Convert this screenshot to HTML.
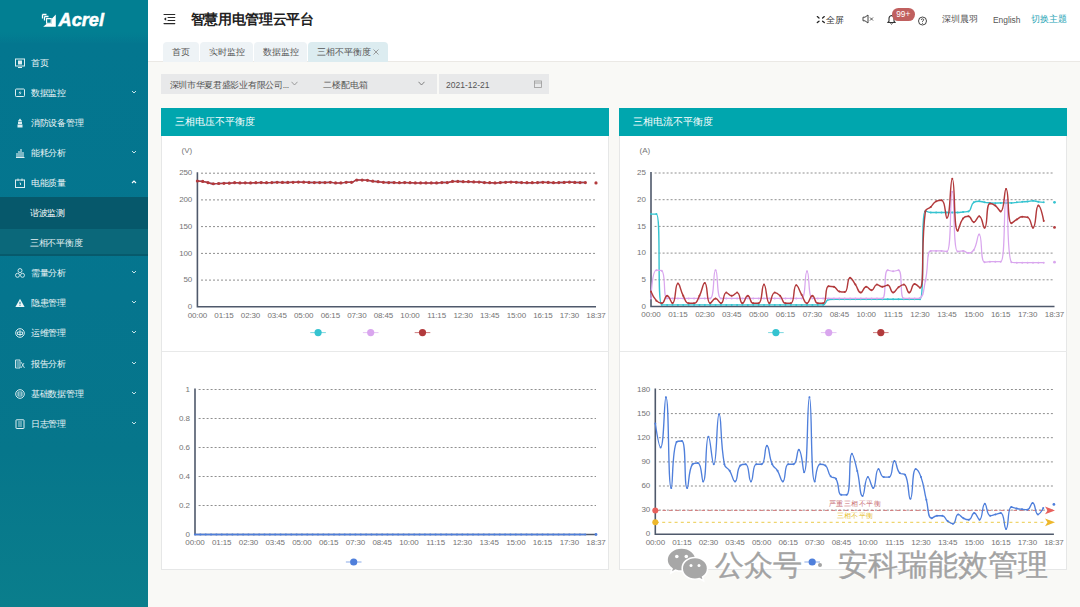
<!DOCTYPE html>
<html><head><meta charset="utf-8">
<style>
*{box-sizing:border-box;margin:0;padding:0}
html,body{width:1080px;height:607px;overflow:hidden;background:#f9f9f6;font-family:"Liberation Sans",sans-serif;position:relative}
.abs{position:absolute}
#side{left:0;top:0;width:148.3px;height:607px;background:linear-gradient(180deg,#027f92 0px,#03768f 44px,#05758e 300px,#06768b 450px,#0a7e8c 607px)}
#logo{left:0;top:0;width:148px;height:44px;background:linear-gradient(180deg,#027f92 0px,#027f92 32px,rgba(3,117,143,0) 44px)}
.mi{position:absolute;left:0;width:148px;height:30px;color:#eef6f8;font-size:8.6px;line-height:30px;letter-spacing:-0.3px}
.mi .t{position:absolute;left:31px;top:0.7px}
.mi .ic{position:absolute;left:15px;top:11px;width:10px;height:10px}
.mi .ch{position:absolute;left:131px;top:12px;width:6px;height:6px}
#hdr{left:148px;top:0;width:932px;height:38px;background:#fff}
#tabsrow{left:148px;top:38px;width:932px;height:24px;background:#fff;border-bottom:1px solid #ebe9e5}
.tab{position:absolute;top:42px;height:19.5px;background:#eef3f6;border-radius:4px 4px 0 0;font-size:8.5px;color:#555;line-height:20px;text-align:center}
.tab.on{background:#dcecf0}
.sel{position:absolute;top:74px;height:20px;background:#e8e9ea;font-size:8.5px;color:#555;line-height:22px}
.panel{position:absolute;background:#fff;border:1px solid #e6e7e7}
.ph{position:absolute;background:#00a6ae;color:#fff;font-size:10px;line-height:27px}
.tk{font-family:"Liberation Sans",sans-serif;font-size:8px;letter-spacing:-0.15px;fill:#747474}
#wm{left:0;top:0}
</style></head><body>
<div id="side" class="abs"></div>
<div id="logo" class="abs">
  <svg class="abs" style="left:41px;top:12.5px" width="16" height="16" viewBox="0 0 16 16">
    <path d="M1.5 1.5 H5.5 M1.5 1.5 V5.5" stroke="#fff" stroke-width="1.3" fill="none"/>
    <path d="M3.5 3.5 H7.5 M3.5 3.5 V7.5" stroke="#fff" stroke-width="1.3" fill="none"/>
    <path d="M14.8 1.5 V13.8 H2.2 L6 10.5 H11 V5.5Z" fill="#fff"/>
    <path d="M5.6 5.6 H10.2 V10.2 H5.6Z" fill="#027f92" stroke="#fff" stroke-width="1.1"/>
  </svg>
  <div class="abs" style="left:58.5px;top:10px;font-size:18.2px;font-weight:bold;font-style:italic;color:#fff;-webkit-text-stroke:0.5px #fff">Acrel</div>
</div>
<!-- menu -->
<div class="mi" style="top:47px"><svg class="ic" viewBox="0 0 10 10"><rect x="0.5" y="1" width="9" height="7" fill="none" stroke="#dfeff2" stroke-width="1"/><rect x="3" y="2.5" width="4" height="4" fill="#dfeff2"/><path d="M3 9.5h4" stroke="#dfeff2"/></svg><span class="t">首页</span></div>
<div class="mi" style="top:77px"><svg class="ic" viewBox="0 0 10 10"><rect x="0.5" y="1" width="9" height="7.5" rx="0.8" fill="none" stroke="#dfeff2" stroke-width="1"/><path d="M5.5 2.5 L3.5 5.2 H5 L4.5 7.2 L6.5 4.5 H5Z" fill="#dfeff2"/></svg><span class="t">数据监控</span><svg class="ch" viewBox="0 0 6 6"><path d="M1 2 L3 4 L5 2" fill="none" stroke="#dfeff2" stroke-width="0.9"/></svg></div>
<div class="mi" style="top:107px"><svg class="ic" viewBox="0 0 10 10"><path d="M5 0.5 L7 3 H3Z M3 3.5 H7 V6 H3Z M2.5 6.5 H7.5 V9.5 H2.5Z" fill="#dfeff2"/></svg><span class="t">消防设备管理</span></div>
<div class="mi" style="top:137px"><svg class="ic" viewBox="0 0 10 10"><path d="M1 9.5 H9.5 M2 9 V5 M4 9 V3 M6 9 V1 M8 9 V4" stroke="#dfeff2" stroke-width="1.1"/></svg><span class="t">能耗分析</span><svg class="ch" viewBox="0 0 6 6"><path d="M1 2 L3 4 L5 2" fill="none" stroke="#dfeff2" stroke-width="0.9"/></svg></div>
<div class="mi" style="top:167px"><svg class="ic" viewBox="0 0 10 10"><rect x="0.5" y="2" width="9" height="7.5" fill="none" stroke="#dfeff2" stroke-width="1"/><path d="M3 0.5 V3 M7 0.5 V3 M4.5 5 H5.5 V7" stroke="#dfeff2" stroke-width="0.9"/></svg><span class="t">电能质量</span><svg class="ch" viewBox="0 0 6 6"><path d="M1 4 L3 2 L5 4" fill="none" stroke="#fff" stroke-width="1.1"/></svg></div>
<div class="abs" style="left:0;top:197px;width:148px;height:32px;background:#06586b"></div>
<div class="abs" style="left:0;top:229px;width:148px;height:25px;background:#0b687a"></div>
<div class="abs" style="left:0;top:253.5px;width:148px;height:2px;background:#075a6c"></div>
<div class="mi" style="top:197px;color:#fff"><span class="t" style="left:30px">谐波监测</span></div>
<div class="mi" style="top:227px;color:#e6f1f3"><span class="t" style="left:30px">三相不平衡度</span></div>
<div class="mi" style="top:257px"><svg class="ic" viewBox="0 0 10 10"><circle cx="5" cy="2.6" r="2" fill="none" stroke="#dfeff2" stroke-width="0.9"/><circle cx="2.5" cy="7.3" r="2" fill="none" stroke="#dfeff2" stroke-width="0.9"/><circle cx="7.5" cy="7.3" r="2" fill="none" stroke="#dfeff2" stroke-width="0.9"/></svg><span class="t">需量分析</span><svg class="ch" viewBox="0 0 6 6"><path d="M1 2 L3 4 L5 2" fill="none" stroke="#dfeff2" stroke-width="0.9"/></svg></div>
<div class="mi" style="top:287px"><svg class="ic" viewBox="0 0 10 10"><path d="M5 0.8 L9.6 9 H0.4Z" fill="#eef6f8"/><path d="M5 3.8 V6.3 M5 7.2 V8" stroke="#06758d" stroke-width="1"/></svg><span class="t">隐患管理</span><svg class="ch" viewBox="0 0 6 6"><path d="M1 2 L3 4 L5 2" fill="none" stroke="#dfeff2" stroke-width="0.9"/></svg></div>
<div class="mi" style="top:317px"><svg class="ic" viewBox="0 0 10 10"><circle cx="5" cy="5" r="4.3" fill="none" stroke="#dfeff2" stroke-width="1"/><path d="M2.5 4 H7.5 V6.5 H2.5Z M5 2 V8" fill="none" stroke="#dfeff2" stroke-width="0.9"/></svg><span class="t">运维管理</span><svg class="ch" viewBox="0 0 6 6"><path d="M1 2 L3 4 L5 2" fill="none" stroke="#dfeff2" stroke-width="0.9"/></svg></div>
<div class="mi" style="top:348px"><svg class="ic" viewBox="0 0 10 10"><path d="M0.5 1 H5 V9 H0.5Z" fill="none" stroke="#dfeff2" stroke-width="0.9"/><path d="M1.5 3 H4 M1.5 5 H4 M1.5 7 H4 M6 3 L9.5 9 M6 9 L9 4" stroke="#dfeff2" stroke-width="0.8"/></svg><span class="t">报告分析</span><svg class="ch" viewBox="0 0 6 6"><path d="M1 2 L3 4 L5 2" fill="none" stroke="#dfeff2" stroke-width="0.9"/></svg></div>
<div class="mi" style="top:378px"><svg class="ic" viewBox="0 0 10 10"><circle cx="5" cy="5" r="4.3" fill="none" stroke="#dfeff2" stroke-width="1"/><path d="M3 3 H7 V7 H3Z M3 5 H7" fill="none" stroke="#dfeff2" stroke-width="0.8"/></svg><span class="t">基础数据管理</span><svg class="ch" viewBox="0 0 6 6"><path d="M1 2 L3 4 L5 2" fill="none" stroke="#dfeff2" stroke-width="0.9"/></svg></div>
<div class="mi" style="top:408px"><svg class="ic" viewBox="0 0 10 10"><rect x="1" y="0.8" width="8" height="8.7" rx="0.5" fill="none" stroke="#dfeff2" stroke-width="1"/><path d="M3 3 H7 M3 5 H7 M3 7 H7" stroke="#dfeff2" stroke-width="0.8"/></svg><span class="t">日志管理</span><svg class="ch" viewBox="0 0 6 6"><path d="M1 2 L3 4 L5 2" fill="none" stroke="#dfeff2" stroke-width="0.9"/></svg></div>

<!-- header -->
<div id="hdr" class="abs"></div>
<svg class="abs" style="left:163px;top:13px" width="13" height="12" viewBox="0 0 13 12">
  <path d="M1 1.5 H11.8 M5 4.5 H11.8 M5 7.5 H11.8 M1 10.6 H11.8" stroke="#2a2a2a" stroke-width="1.1" stroke-linecap="round"/>
  <path d="M3.2 4.3 L0.9 6 L3.2 7.7Z" fill="#2a2a2a"/>
</svg>
<div class="abs" style="left:190.5px;top:10.5px;font-size:14px;letter-spacing:-0.3px;font-weight:bold;color:#222;white-space:nowrap">智慧用电管理云平台</div>
<svg class="abs" style="left:815px;top:14px" width="11" height="10" viewBox="0 0 11 10">
  <path d="M2.3 2.6 L4 4 M9.3 2.6 L7.6 4 M2.3 8.6 L4 7.2 M9.3 8.6 L7.6 7.2" stroke="#222" stroke-width="1.3" stroke-linecap="round" fill="none"/>
</svg>
<div class="abs" style="left:826px;top:14.8px;font-size:8.5px;color:#333">全屏</div>
<svg class="abs" style="left:862px;top:14px" width="13" height="10" viewBox="0 0 13 10">
  <path d="M1 3.2 H3 L6 1 V9 L3 6.8 H1Z" fill="none" stroke="#444" stroke-width="1"/>
  <path d="M8 3.5 L11 6.5 M11 3.5 L8 6.5" stroke="#444" stroke-width="0.9"/>
</svg>
<svg class="abs" style="left:886px;top:14px" width="11" height="11" viewBox="0 0 11 11">
  <path d="M2 8.5 H9 L8 7.2 V4.5 Q8 2 5.5 1.5 Q3 2 3 4.5 V7.2Z" fill="none" stroke="#333" stroke-width="1.1"/>
  <path d="M4.5 9.5 Q5.5 10.7 6.5 9.5" stroke="#333" stroke-width="1" fill="none"/>
</svg>
<div class="abs" style="left:891.5px;top:8.2px;width:23.5px;height:12.8px;border-radius:6.4px;background:#c0605f;color:#fff;font-size:8.3px;line-height:13.5px;text-align:center">99+</div>
<svg class="abs" style="left:917px;top:16px" width="11" height="11" viewBox="0 0 11 11">
  <circle cx="5.5" cy="5" r="4" fill="none" stroke="#333" stroke-width="0.9"/>
  <path d="M4.3 4 Q4.3 2.8 5.5 2.8 Q6.7 2.8 6.7 3.9 Q6.7 4.6 5.5 5.1 V5.9" fill="none" stroke="#333" stroke-width="0.8"/>
  <circle cx="5.5" cy="7.2" r="0.5" fill="#333"/>
</svg>
<div class="abs" style="left:942px;top:14px;font-size:8.5px;color:#555">深圳晨羽</div>
<div class="abs" style="left:993px;top:14.5px;font-size:8.4px;color:#555">English</div>
<div class="abs" style="left:1031px;top:14px;font-size:8.5px;color:#26a4b5">切换主题</div>

<!-- tabs -->
<div id="tabsrow" class="abs"></div>
<div class="tab" style="left:163px;width:36px">首页</div>
<div class="tab" style="left:200px;width:53px">实时监控</div>
<div class="tab" style="left:254px;width:53px">数据监控</div>
<div class="tab on" style="left:308px;width:80px;text-align:left;padding-left:9px">三相不平衡度<svg style="position:absolute;left:65px;top:7px" width="6" height="6" viewBox="0 0 6 6"><path d="M0.5 0.5 L5.5 5.5 M5.5 0.5 L0.5 5.5" stroke="#888" stroke-width="0.8"/></svg></div>

<!-- filters -->
<div class="sel" style="left:161px;width:144px;padding-left:8.6px;font-size:8.6px;letter-spacing:-0.3px;white-space:nowrap">深圳市华夏君盛影业有限公司...</div>
<svg class="abs" style="left:291px;top:81px" width="7" height="5" viewBox="0 0 7 5"><path d="M0.5 0.8 L3.5 4 L6.5 0.8" fill="none" stroke="#888" stroke-width="0.8"/></svg>
<div class="sel" style="left:305px;width:132px;padding-left:18px">二楼配电箱</div>
<svg class="abs" style="left:418px;top:81px" width="7" height="5" viewBox="0 0 7 5"><path d="M0.5 0.8 L3.5 4 L6.5 0.8" fill="none" stroke="#666" stroke-width="0.8"/></svg>
<div class="sel" style="left:439px;width:110px;padding-left:7px;color:#555">2021-12-21</div>
<svg class="abs" style="left:534px;top:80px" width="8" height="8" viewBox="0 0 8 8"><rect x="0.5" y="1" width="7" height="6.5" fill="none" stroke="#999" stroke-width="0.8"/><path d="M0.5 3 H7.5" stroke="#999" stroke-width="0.8"/></svg>

<!-- panels -->
<div class="panel" style="left:161px;top:108px;width:448px;height:461.5px"></div>
<div class="panel" style="left:619px;top:108px;width:448px;height:461.5px"></div>
<div class="abs" style="left:162px;top:351px;width:447px;height:1px;background:#e8e9e9"></div>
<div class="abs" style="left:620px;top:351px;width:447px;height:1px;background:#e8e9e9"></div>
<div class="ph" style="left:161px;top:108px;width:448px;height:27.5px;padding-left:14px">三相电压不平衡度</div>
<div class="ph" style="left:619px;top:108px;width:448px;height:27.5px;padding-left:14px">三相电流不平衡度</div>
<div class="abs" style="left:181.5px;top:145.5px;font-size:8px;color:#777">(V)</div>
<div class="abs" style="left:639.5px;top:145.5px;font-size:8px;color:#777">(A)</div>

<svg class="abs" style="left:0;top:0" width="1080" height="607" viewBox="0 0 1080 607">
<text x="192.1" y="309.0" text-anchor="end" class="tk">0</text>
<line x1="201.0" y1="280.1" x2="596.0" y2="280.1" stroke="#8f8f8f" stroke-width="1" stroke-dasharray="2 2"/>
<text x="192.1" y="282.3" text-anchor="end" class="tk">50</text>
<line x1="201.0" y1="253.4" x2="596.0" y2="253.4" stroke="#8f8f8f" stroke-width="1" stroke-dasharray="2 2"/>
<text x="192.1" y="255.6" text-anchor="end" class="tk">100</text>
<line x1="201.0" y1="226.6" x2="596.0" y2="226.6" stroke="#8f8f8f" stroke-width="1" stroke-dasharray="2 2"/>
<text x="192.1" y="228.8" text-anchor="end" class="tk">150</text>
<line x1="201.0" y1="199.9" x2="596.0" y2="199.9" stroke="#8f8f8f" stroke-width="1" stroke-dasharray="2 2"/>
<text x="192.1" y="202.1" text-anchor="end" class="tk">200</text>
<line x1="201.0" y1="173.2" x2="596.0" y2="173.2" stroke="#8f8f8f" stroke-width="1" stroke-dasharray="2 2"/>
<text x="192.1" y="175.4" text-anchor="end" class="tk">250</text>
<text x="197.4" y="317.7" text-anchor="middle" class="tk">00:00</text>
<text x="224.0" y="317.7" text-anchor="middle" class="tk">01:15</text>
<text x="250.5" y="317.7" text-anchor="middle" class="tk">02:30</text>
<text x="277.1" y="317.7" text-anchor="middle" class="tk">03:45</text>
<text x="303.7" y="317.7" text-anchor="middle" class="tk">05:00</text>
<text x="330.3" y="317.7" text-anchor="middle" class="tk">06:15</text>
<text x="356.8" y="317.7" text-anchor="middle" class="tk">07:30</text>
<text x="383.4" y="317.7" text-anchor="middle" class="tk">08:45</text>
<text x="410.0" y="317.7" text-anchor="middle" class="tk">10:00</text>
<text x="436.6" y="317.7" text-anchor="middle" class="tk">11:15</text>
<text x="463.1" y="317.7" text-anchor="middle" class="tk">12:30</text>
<text x="489.7" y="317.7" text-anchor="middle" class="tk">13:45</text>
<text x="516.3" y="317.7" text-anchor="middle" class="tk">15:00</text>
<text x="542.9" y="317.7" text-anchor="middle" class="tk">16:15</text>
<text x="569.4" y="317.7" text-anchor="middle" class="tk">17:30</text>
<text x="596.0" y="317.7" text-anchor="middle" class="tk">18:37</text>
<path d="M197.40 181.02 C197.40 181.02 200.09 181.02 202.71 181.41 C205.41 181.81 205.36 182.12 208.03 182.70 C210.67 183.28 210.66 183.74 213.34 183.74 C215.98 183.74 216.00 183.58 218.66 183.48 C221.31 183.38 221.32 183.42 223.97 183.35 C226.63 183.29 226.64 183.35 229.29 183.22 C231.95 183.09 231.94 182.70 234.60 182.70 C237.26 182.70 237.26 182.96 239.92 182.96 C242.57 182.96 242.57 182.83 245.23 182.83 C247.89 182.83 247.89 182.96 250.55 182.96 C253.21 182.96 253.20 182.80 255.86 182.70 C258.52 182.61 258.52 182.57 261.18 182.57 C263.83 182.57 263.83 182.70 266.49 182.70 C269.15 182.70 269.15 182.67 271.81 182.57 C274.46 182.48 274.46 182.32 277.12 182.32 C279.78 182.32 279.78 182.44 282.43 182.44 C285.09 182.44 285.09 182.44 287.75 182.44 C290.41 182.44 290.41 182.41 293.06 182.32 C295.72 182.22 295.72 182.06 298.38 182.06 C301.03 182.06 301.04 182.09 303.69 182.19 C306.35 182.28 306.35 182.35 309.01 182.44 C311.66 182.54 311.66 182.57 314.32 182.57 C316.98 182.57 316.98 182.57 319.64 182.57 C322.29 182.57 322.30 182.57 324.95 182.57 C327.61 182.57 327.62 182.32 330.27 182.32 C332.93 182.32 332.91 182.96 335.58 182.96 C338.23 182.96 338.25 182.96 340.90 182.96 C343.56 182.96 343.54 182.32 346.21 182.32 C348.86 182.32 348.97 182.32 351.53 182.32 C354.29 182.32 354.08 180.11 356.84 180.11 C359.39 180.11 359.50 180.11 362.15 180.11 C364.81 180.11 364.82 180.11 367.47 180.37 C370.14 180.63 370.12 180.82 372.78 181.15 C375.43 181.47 375.44 181.38 378.10 181.67 C380.76 181.96 380.75 182.09 383.41 182.32 C386.06 182.54 386.07 182.57 388.73 182.57 C391.38 182.57 391.39 182.57 394.04 182.57 C396.70 182.57 396.70 182.70 399.36 182.70 C402.01 182.70 402.01 182.57 404.67 182.57 C407.33 182.57 407.33 182.61 409.99 182.70 C412.65 182.80 412.64 182.96 415.30 182.96 C417.96 182.96 417.96 182.96 420.62 182.96 C423.27 182.96 423.27 182.96 425.93 182.96 C428.59 182.96 428.59 182.96 431.25 182.96 C433.90 182.96 433.91 182.96 436.56 182.96 C439.22 182.96 439.21 182.57 441.87 182.57 C444.53 182.57 444.56 182.57 447.19 182.57 C449.88 182.57 449.82 181.41 452.50 181.41 C455.13 181.41 455.16 181.41 457.82 181.41 C460.48 181.41 460.47 181.67 463.13 181.67 C465.79 181.67 465.79 181.67 468.45 181.67 C471.11 181.67 471.10 181.83 473.76 181.93 C476.42 182.02 476.43 181.93 479.08 182.06 C481.74 182.19 481.73 182.44 484.39 182.57 C487.04 182.70 487.05 182.61 489.71 182.70 C492.37 182.80 492.37 182.96 495.02 182.96 C497.68 182.96 497.68 182.74 500.34 182.57 C502.99 182.41 502.99 182.44 505.65 182.32 C508.31 182.19 508.31 182.06 510.97 182.06 C513.62 182.06 513.62 182.19 516.28 182.32 C518.94 182.44 518.94 182.48 521.59 182.57 C524.25 182.67 524.25 182.70 526.91 182.70 C529.57 182.70 529.57 182.70 532.22 182.70 C534.88 182.70 534.88 182.67 537.54 182.57 C540.20 182.48 540.19 182.32 542.85 182.32 C545.51 182.32 545.51 182.35 548.17 182.44 C550.83 182.54 550.82 182.70 553.48 182.70 C556.14 182.70 556.14 182.64 558.80 182.57 C561.45 182.51 561.46 182.54 564.11 182.44 C566.77 182.35 566.77 182.19 569.43 182.19 C572.08 182.19 572.08 182.35 574.74 182.44 C577.40 182.54 577.40 182.57 580.06 182.57 C582.71 182.57 585.37 182.57 585.37 182.57" fill="none" stroke="#35c3d0" stroke-width="1.40" stroke-linejoin="round"/>
<path d="M197.40 181.02 C197.40 181.02 200.09 181.02 202.71 181.41 C205.41 181.81 205.36 182.12 208.03 182.70 C210.67 183.28 210.66 183.74 213.34 183.74 C215.98 183.74 216.00 183.58 218.66 183.48 C221.31 183.38 221.32 183.42 223.97 183.35 C226.63 183.29 226.64 183.35 229.29 183.22 C231.95 183.09 231.94 182.70 234.60 182.70 C237.26 182.70 237.26 182.96 239.92 182.96 C242.57 182.96 242.57 182.83 245.23 182.83 C247.89 182.83 247.89 182.96 250.55 182.96 C253.21 182.96 253.20 182.80 255.86 182.70 C258.52 182.61 258.52 182.57 261.18 182.57 C263.83 182.57 263.83 182.70 266.49 182.70 C269.15 182.70 269.15 182.67 271.81 182.57 C274.46 182.48 274.46 182.32 277.12 182.32 C279.78 182.32 279.78 182.44 282.43 182.44 C285.09 182.44 285.09 182.44 287.75 182.44 C290.41 182.44 290.41 182.41 293.06 182.32 C295.72 182.22 295.72 182.06 298.38 182.06 C301.03 182.06 301.04 182.09 303.69 182.19 C306.35 182.28 306.35 182.35 309.01 182.44 C311.66 182.54 311.66 182.57 314.32 182.57 C316.98 182.57 316.98 182.57 319.64 182.57 C322.29 182.57 322.30 182.57 324.95 182.57 C327.61 182.57 327.62 182.32 330.27 182.32 C332.93 182.32 332.91 182.96 335.58 182.96 C338.23 182.96 338.25 182.96 340.90 182.96 C343.56 182.96 343.54 182.32 346.21 182.32 C348.86 182.32 348.97 182.32 351.53 182.32 C354.29 182.32 354.08 180.11 356.84 180.11 C359.39 180.11 359.50 180.11 362.15 180.11 C364.81 180.11 364.82 180.11 367.47 180.37 C370.14 180.63 370.12 180.82 372.78 181.15 C375.43 181.47 375.44 181.38 378.10 181.67 C380.76 181.96 380.75 182.09 383.41 182.32 C386.06 182.54 386.07 182.57 388.73 182.57 C391.38 182.57 391.39 182.57 394.04 182.57 C396.70 182.57 396.70 182.70 399.36 182.70 C402.01 182.70 402.01 182.57 404.67 182.57 C407.33 182.57 407.33 182.61 409.99 182.70 C412.65 182.80 412.64 182.96 415.30 182.96 C417.96 182.96 417.96 182.96 420.62 182.96 C423.27 182.96 423.27 182.96 425.93 182.96 C428.59 182.96 428.59 182.96 431.25 182.96 C433.90 182.96 433.91 182.96 436.56 182.96 C439.22 182.96 439.21 182.57 441.87 182.57 C444.53 182.57 444.56 182.57 447.19 182.57 C449.88 182.57 449.82 181.41 452.50 181.41 C455.13 181.41 455.16 181.41 457.82 181.41 C460.48 181.41 460.47 181.67 463.13 181.67 C465.79 181.67 465.79 181.67 468.45 181.67 C471.11 181.67 471.10 181.83 473.76 181.93 C476.42 182.02 476.43 181.93 479.08 182.06 C481.74 182.19 481.73 182.44 484.39 182.57 C487.04 182.70 487.05 182.61 489.71 182.70 C492.37 182.80 492.37 182.96 495.02 182.96 C497.68 182.96 497.68 182.74 500.34 182.57 C502.99 182.41 502.99 182.44 505.65 182.32 C508.31 182.19 508.31 182.06 510.97 182.06 C513.62 182.06 513.62 182.19 516.28 182.32 C518.94 182.44 518.94 182.48 521.59 182.57 C524.25 182.67 524.25 182.70 526.91 182.70 C529.57 182.70 529.57 182.70 532.22 182.70 C534.88 182.70 534.88 182.67 537.54 182.57 C540.20 182.48 540.19 182.32 542.85 182.32 C545.51 182.32 545.51 182.35 548.17 182.44 C550.83 182.54 550.82 182.70 553.48 182.70 C556.14 182.70 556.14 182.64 558.80 182.57 C561.45 182.51 561.46 182.54 564.11 182.44 C566.77 182.35 566.77 182.19 569.43 182.19 C572.08 182.19 572.08 182.35 574.74 182.44 C577.40 182.54 577.40 182.57 580.06 182.57 C582.71 182.57 585.37 182.57 585.37 182.57" fill="none" stroke="#d9a6ee" stroke-width="1.40" stroke-linejoin="round"/>
<path d="M197.4 172.2 L197.4 306.8 L596.0 306.8" fill="none" stroke="#4f596b" stroke-width="1.6"/>
<path d="M197.40 181.02 C197.40 181.02 200.09 181.02 202.71 181.41 C205.41 181.81 205.36 182.12 208.03 182.70 C210.67 183.28 210.66 183.74 213.34 183.74 C215.98 183.74 216.00 183.58 218.66 183.48 C221.31 183.38 221.32 183.42 223.97 183.35 C226.63 183.29 226.64 183.35 229.29 183.22 C231.95 183.09 231.94 182.70 234.60 182.70 C237.26 182.70 237.26 182.96 239.92 182.96 C242.57 182.96 242.57 182.83 245.23 182.83 C247.89 182.83 247.89 182.96 250.55 182.96 C253.21 182.96 253.20 182.80 255.86 182.70 C258.52 182.61 258.52 182.57 261.18 182.57 C263.83 182.57 263.83 182.70 266.49 182.70 C269.15 182.70 269.15 182.67 271.81 182.57 C274.46 182.48 274.46 182.32 277.12 182.32 C279.78 182.32 279.78 182.44 282.43 182.44 C285.09 182.44 285.09 182.44 287.75 182.44 C290.41 182.44 290.41 182.41 293.06 182.32 C295.72 182.22 295.72 182.06 298.38 182.06 C301.03 182.06 301.04 182.09 303.69 182.19 C306.35 182.28 306.35 182.35 309.01 182.44 C311.66 182.54 311.66 182.57 314.32 182.57 C316.98 182.57 316.98 182.57 319.64 182.57 C322.29 182.57 322.30 182.57 324.95 182.57 C327.61 182.57 327.62 182.32 330.27 182.32 C332.93 182.32 332.91 182.96 335.58 182.96 C338.23 182.96 338.25 182.96 340.90 182.96 C343.56 182.96 343.54 182.32 346.21 182.32 C348.86 182.32 348.97 182.32 351.53 182.32 C354.29 182.32 354.08 180.11 356.84 180.11 C359.39 180.11 359.50 180.11 362.15 180.11 C364.81 180.11 364.82 180.11 367.47 180.37 C370.14 180.63 370.12 180.82 372.78 181.15 C375.43 181.47 375.44 181.38 378.10 181.67 C380.76 181.96 380.75 182.09 383.41 182.32 C386.06 182.54 386.07 182.57 388.73 182.57 C391.38 182.57 391.39 182.57 394.04 182.57 C396.70 182.57 396.70 182.70 399.36 182.70 C402.01 182.70 402.01 182.57 404.67 182.57 C407.33 182.57 407.33 182.61 409.99 182.70 C412.65 182.80 412.64 182.96 415.30 182.96 C417.96 182.96 417.96 182.96 420.62 182.96 C423.27 182.96 423.27 182.96 425.93 182.96 C428.59 182.96 428.59 182.96 431.25 182.96 C433.90 182.96 433.91 182.96 436.56 182.96 C439.22 182.96 439.21 182.57 441.87 182.57 C444.53 182.57 444.56 182.57 447.19 182.57 C449.88 182.57 449.82 181.41 452.50 181.41 C455.13 181.41 455.16 181.41 457.82 181.41 C460.48 181.41 460.47 181.67 463.13 181.67 C465.79 181.67 465.79 181.67 468.45 181.67 C471.11 181.67 471.10 181.83 473.76 181.93 C476.42 182.02 476.43 181.93 479.08 182.06 C481.74 182.19 481.73 182.44 484.39 182.57 C487.04 182.70 487.05 182.61 489.71 182.70 C492.37 182.80 492.37 182.96 495.02 182.96 C497.68 182.96 497.68 182.74 500.34 182.57 C502.99 182.41 502.99 182.44 505.65 182.32 C508.31 182.19 508.31 182.06 510.97 182.06 C513.62 182.06 513.62 182.19 516.28 182.32 C518.94 182.44 518.94 182.48 521.59 182.57 C524.25 182.67 524.25 182.70 526.91 182.70 C529.57 182.70 529.57 182.70 532.22 182.70 C534.88 182.70 534.88 182.67 537.54 182.57 C540.20 182.48 540.19 182.32 542.85 182.32 C545.51 182.32 545.51 182.35 548.17 182.44 C550.83 182.54 550.82 182.70 553.48 182.70 C556.14 182.70 556.14 182.64 558.80 182.57 C561.45 182.51 561.46 182.54 564.11 182.44 C566.77 182.35 566.77 182.19 569.43 182.19 C572.08 182.19 572.08 182.35 574.74 182.44 C577.40 182.54 577.40 182.57 580.06 182.57 C582.71 182.57 585.37 182.57 585.37 182.57" fill="none" stroke="#b23a3c" stroke-width="1.50" stroke-linejoin="round"/>
<circle cx="197.40" cy="181.02" r="1.60" fill="#b23a3c"/>
<circle cx="202.71" cy="181.41" r="1.60" fill="#b23a3c"/>
<circle cx="208.03" cy="182.70" r="1.60" fill="#b23a3c"/>
<circle cx="213.34" cy="183.74" r="1.60" fill="#b23a3c"/>
<circle cx="218.66" cy="183.48" r="1.60" fill="#b23a3c"/>
<circle cx="223.97" cy="183.35" r="1.60" fill="#b23a3c"/>
<circle cx="229.29" cy="183.22" r="1.60" fill="#b23a3c"/>
<circle cx="234.60" cy="182.70" r="1.60" fill="#b23a3c"/>
<circle cx="239.92" cy="182.96" r="1.60" fill="#b23a3c"/>
<circle cx="245.23" cy="182.83" r="1.60" fill="#b23a3c"/>
<circle cx="250.55" cy="182.96" r="1.60" fill="#b23a3c"/>
<circle cx="255.86" cy="182.70" r="1.60" fill="#b23a3c"/>
<circle cx="261.18" cy="182.57" r="1.60" fill="#b23a3c"/>
<circle cx="266.49" cy="182.70" r="1.60" fill="#b23a3c"/>
<circle cx="271.81" cy="182.57" r="1.60" fill="#b23a3c"/>
<circle cx="277.12" cy="182.32" r="1.60" fill="#b23a3c"/>
<circle cx="282.43" cy="182.44" r="1.60" fill="#b23a3c"/>
<circle cx="287.75" cy="182.44" r="1.60" fill="#b23a3c"/>
<circle cx="293.06" cy="182.32" r="1.60" fill="#b23a3c"/>
<circle cx="298.38" cy="182.06" r="1.60" fill="#b23a3c"/>
<circle cx="303.69" cy="182.19" r="1.60" fill="#b23a3c"/>
<circle cx="309.01" cy="182.44" r="1.60" fill="#b23a3c"/>
<circle cx="314.32" cy="182.57" r="1.60" fill="#b23a3c"/>
<circle cx="319.64" cy="182.57" r="1.60" fill="#b23a3c"/>
<circle cx="324.95" cy="182.57" r="1.60" fill="#b23a3c"/>
<circle cx="330.27" cy="182.32" r="1.60" fill="#b23a3c"/>
<circle cx="335.58" cy="182.96" r="1.60" fill="#b23a3c"/>
<circle cx="340.90" cy="182.96" r="1.60" fill="#b23a3c"/>
<circle cx="346.21" cy="182.32" r="1.60" fill="#b23a3c"/>
<circle cx="351.53" cy="182.32" r="1.60" fill="#b23a3c"/>
<circle cx="356.84" cy="180.11" r="1.60" fill="#b23a3c"/>
<circle cx="362.15" cy="180.11" r="1.60" fill="#b23a3c"/>
<circle cx="367.47" cy="180.37" r="1.60" fill="#b23a3c"/>
<circle cx="372.78" cy="181.15" r="1.60" fill="#b23a3c"/>
<circle cx="378.10" cy="181.67" r="1.60" fill="#b23a3c"/>
<circle cx="383.41" cy="182.32" r="1.60" fill="#b23a3c"/>
<circle cx="388.73" cy="182.57" r="1.60" fill="#b23a3c"/>
<circle cx="394.04" cy="182.57" r="1.60" fill="#b23a3c"/>
<circle cx="399.36" cy="182.70" r="1.60" fill="#b23a3c"/>
<circle cx="404.67" cy="182.57" r="1.60" fill="#b23a3c"/>
<circle cx="409.99" cy="182.70" r="1.60" fill="#b23a3c"/>
<circle cx="415.30" cy="182.96" r="1.60" fill="#b23a3c"/>
<circle cx="420.62" cy="182.96" r="1.60" fill="#b23a3c"/>
<circle cx="425.93" cy="182.96" r="1.60" fill="#b23a3c"/>
<circle cx="431.25" cy="182.96" r="1.60" fill="#b23a3c"/>
<circle cx="436.56" cy="182.96" r="1.60" fill="#b23a3c"/>
<circle cx="441.87" cy="182.57" r="1.60" fill="#b23a3c"/>
<circle cx="447.19" cy="182.57" r="1.60" fill="#b23a3c"/>
<circle cx="452.50" cy="181.41" r="1.60" fill="#b23a3c"/>
<circle cx="457.82" cy="181.41" r="1.60" fill="#b23a3c"/>
<circle cx="463.13" cy="181.67" r="1.60" fill="#b23a3c"/>
<circle cx="468.45" cy="181.67" r="1.60" fill="#b23a3c"/>
<circle cx="473.76" cy="181.93" r="1.60" fill="#b23a3c"/>
<circle cx="479.08" cy="182.06" r="1.60" fill="#b23a3c"/>
<circle cx="484.39" cy="182.57" r="1.60" fill="#b23a3c"/>
<circle cx="489.71" cy="182.70" r="1.60" fill="#b23a3c"/>
<circle cx="495.02" cy="182.96" r="1.60" fill="#b23a3c"/>
<circle cx="500.34" cy="182.57" r="1.60" fill="#b23a3c"/>
<circle cx="505.65" cy="182.32" r="1.60" fill="#b23a3c"/>
<circle cx="510.97" cy="182.06" r="1.60" fill="#b23a3c"/>
<circle cx="516.28" cy="182.32" r="1.60" fill="#b23a3c"/>
<circle cx="521.59" cy="182.57" r="1.60" fill="#b23a3c"/>
<circle cx="526.91" cy="182.70" r="1.60" fill="#b23a3c"/>
<circle cx="532.22" cy="182.70" r="1.60" fill="#b23a3c"/>
<circle cx="537.54" cy="182.57" r="1.60" fill="#b23a3c"/>
<circle cx="542.85" cy="182.32" r="1.60" fill="#b23a3c"/>
<circle cx="548.17" cy="182.44" r="1.60" fill="#b23a3c"/>
<circle cx="553.48" cy="182.70" r="1.60" fill="#b23a3c"/>
<circle cx="558.80" cy="182.57" r="1.60" fill="#b23a3c"/>
<circle cx="564.11" cy="182.44" r="1.60" fill="#b23a3c"/>
<circle cx="569.43" cy="182.19" r="1.60" fill="#b23a3c"/>
<circle cx="574.74" cy="182.44" r="1.60" fill="#b23a3c"/>
<circle cx="580.06" cy="182.57" r="1.60" fill="#b23a3c"/>
<circle cx="585.37" cy="182.57" r="1.60" fill="#b23a3c"/>
<circle cx="596.00" cy="182.96" r="1.60" fill="#b23a3c"/>
<text x="645.7" y="308.7" text-anchor="end" class="tk">0</text>
<line x1="654.6" y1="279.8" x2="1054.5" y2="279.8" stroke="#8f8f8f" stroke-width="1" stroke-dasharray="2 2"/>
<text x="645.7" y="282.0" text-anchor="end" class="tk">5</text>
<line x1="654.6" y1="253.1" x2="1054.5" y2="253.1" stroke="#8f8f8f" stroke-width="1" stroke-dasharray="2 2"/>
<text x="645.7" y="255.3" text-anchor="end" class="tk">10</text>
<line x1="654.6" y1="226.4" x2="1054.5" y2="226.4" stroke="#8f8f8f" stroke-width="1" stroke-dasharray="2 2"/>
<text x="645.7" y="228.6" text-anchor="end" class="tk">15</text>
<line x1="654.6" y1="199.7" x2="1054.5" y2="199.7" stroke="#8f8f8f" stroke-width="1" stroke-dasharray="2 2"/>
<text x="645.7" y="201.9" text-anchor="end" class="tk">20</text>
<line x1="654.6" y1="173.0" x2="1054.5" y2="173.0" stroke="#8f8f8f" stroke-width="1" stroke-dasharray="2 2"/>
<text x="645.7" y="175.2" text-anchor="end" class="tk">25</text>
<text x="651.0" y="317.4" text-anchor="middle" class="tk">00:00</text>
<text x="677.9" y="317.4" text-anchor="middle" class="tk">01:15</text>
<text x="704.8" y="317.4" text-anchor="middle" class="tk">02:30</text>
<text x="731.7" y="317.4" text-anchor="middle" class="tk">03:45</text>
<text x="758.6" y="317.4" text-anchor="middle" class="tk">05:00</text>
<text x="785.5" y="317.4" text-anchor="middle" class="tk">06:15</text>
<text x="812.4" y="317.4" text-anchor="middle" class="tk">07:30</text>
<text x="839.3" y="317.4" text-anchor="middle" class="tk">08:45</text>
<text x="866.2" y="317.4" text-anchor="middle" class="tk">10:00</text>
<text x="893.1" y="317.4" text-anchor="middle" class="tk">11:15</text>
<text x="920.0" y="317.4" text-anchor="middle" class="tk">12:30</text>
<text x="946.9" y="317.4" text-anchor="middle" class="tk">13:45</text>
<text x="973.8" y="317.4" text-anchor="middle" class="tk">15:00</text>
<text x="1000.7" y="317.4" text-anchor="middle" class="tk">16:15</text>
<text x="1027.6" y="317.4" text-anchor="middle" class="tk">17:30</text>
<text x="1054.5" y="317.4" text-anchor="middle" class="tk">18:37</text>
<path d="M651.0 172.0 L651.0 306.5 L1054.5 306.5" fill="none" stroke="#4f596b" stroke-width="1.6"/>
<path d="M651.00 214.12 C651.00 214.12 656.08 214.12 656.38 214.12 C661.46 214.12 656.68 304.90 661.76 304.90 C662.06 304.90 664.45 304.90 667.14 304.90 C669.83 304.90 669.83 304.90 672.52 304.90 C675.21 304.90 675.21 304.90 677.90 304.90 C680.59 304.90 680.59 304.90 683.28 304.90 C685.97 304.90 685.97 304.90 688.66 304.90 C691.35 304.90 691.35 304.90 694.04 304.90 C696.73 304.90 696.73 304.90 699.42 304.90 C702.11 304.90 702.11 304.90 704.80 304.90 C707.49 304.90 707.49 304.90 710.18 304.90 C712.87 304.90 712.87 304.90 715.56 304.90 C718.25 304.90 718.25 304.90 720.94 304.90 C723.63 304.90 723.63 304.90 726.32 304.90 C729.01 304.90 729.01 304.90 731.70 304.90 C734.39 304.90 734.39 304.90 737.08 304.90 C739.77 304.90 739.77 304.90 742.46 304.90 C745.15 304.90 745.15 304.90 747.84 304.90 C750.53 304.90 750.53 304.90 753.22 304.90 C755.91 304.90 755.91 304.90 758.60 304.90 C761.29 304.90 761.29 304.90 763.98 304.90 C766.67 304.90 766.67 304.90 769.36 304.90 C772.05 304.90 772.05 304.90 774.74 304.90 C777.43 304.90 777.43 304.90 780.12 304.90 C782.81 304.90 782.81 304.90 785.50 304.90 C788.19 304.90 788.19 304.90 790.88 304.90 C793.57 304.90 793.57 304.90 796.26 304.90 C798.95 304.90 798.95 304.90 801.64 304.90 C804.33 304.90 804.33 304.90 807.02 304.90 C809.71 304.90 809.71 304.90 812.40 304.90 C815.09 304.90 815.09 304.90 817.78 304.90 C820.47 304.90 820.93 304.90 823.16 304.90 C826.31 304.90 825.39 299.93 828.54 299.56 C830.77 299.29 831.23 299.29 833.92 299.29 C836.61 299.29 836.61 299.29 839.30 299.29 C841.99 299.29 841.99 299.29 844.68 299.29 C847.37 299.29 847.37 299.29 850.06 299.29 C852.75 299.29 852.75 299.29 855.44 299.29 C858.13 299.29 858.13 299.29 860.82 299.29 C863.51 299.29 863.51 299.29 866.20 299.29 C868.89 299.29 868.89 299.29 871.58 299.29 C874.27 299.29 874.27 299.29 876.96 299.29 C879.65 299.29 879.65 299.29 882.34 299.29 C885.03 299.29 885.03 299.29 887.72 299.29 C890.41 299.29 890.41 299.29 893.10 299.29 C895.79 299.29 895.79 299.29 898.48 299.29 C901.17 299.29 901.17 299.29 903.86 299.29 C906.55 299.29 906.55 299.29 909.24 299.29 C911.93 299.29 911.93 299.29 914.62 299.29 C917.31 299.29 919.69 299.29 920.00 299.29 C925.07 299.29 920.32 210.91 925.38 210.91 C925.70 210.91 928.01 212.52 930.76 212.52 C933.39 212.52 933.45 212.52 936.14 212.52 C938.83 212.52 938.83 212.52 941.52 212.52 C944.21 212.52 944.21 212.52 946.90 212.52 C949.59 212.52 949.59 212.52 952.28 212.52 C954.97 212.52 954.98 212.52 957.66 212.52 C960.36 212.52 960.35 212.25 963.04 211.98 C965.73 211.72 966.60 211.98 968.42 211.45 C971.98 210.41 970.26 204.42 973.80 202.37 C975.64 201.30 976.49 201.30 979.18 201.30 C981.87 201.30 981.85 201.97 984.56 202.37 C987.23 202.77 987.25 202.70 989.94 202.90 C992.63 203.10 992.63 203.17 995.32 203.17 C998.01 203.17 998.01 202.90 1000.70 202.90 C1003.39 202.90 1003.39 202.90 1006.08 202.90 C1008.77 202.90 1008.78 202.90 1011.46 202.90 C1014.16 202.90 1014.15 202.64 1016.84 202.37 C1019.53 202.10 1019.53 202.04 1022.22 201.84 C1024.91 201.64 1024.92 201.83 1027.60 201.57 C1030.30 201.30 1030.30 200.77 1032.98 200.77 C1035.68 200.77 1035.65 201.43 1038.36 201.84 C1041.03 202.23 1043.74 202.37 1043.74 202.37" fill="none" stroke="#35c3d0" stroke-width="1.40" stroke-linejoin="round"/>
<circle cx="651.00" cy="214.12" r="1.00" fill="#35c3d0"/>
<circle cx="656.38" cy="214.12" r="1.00" fill="#35c3d0"/>
<circle cx="661.76" cy="304.90" r="1.00" fill="#35c3d0"/>
<circle cx="667.14" cy="304.90" r="1.00" fill="#35c3d0"/>
<circle cx="672.52" cy="304.90" r="1.00" fill="#35c3d0"/>
<circle cx="677.90" cy="304.90" r="1.00" fill="#35c3d0"/>
<circle cx="683.28" cy="304.90" r="1.00" fill="#35c3d0"/>
<circle cx="688.66" cy="304.90" r="1.00" fill="#35c3d0"/>
<circle cx="694.04" cy="304.90" r="1.00" fill="#35c3d0"/>
<circle cx="699.42" cy="304.90" r="1.00" fill="#35c3d0"/>
<circle cx="704.80" cy="304.90" r="1.00" fill="#35c3d0"/>
<circle cx="710.18" cy="304.90" r="1.00" fill="#35c3d0"/>
<circle cx="715.56" cy="304.90" r="1.00" fill="#35c3d0"/>
<circle cx="720.94" cy="304.90" r="1.00" fill="#35c3d0"/>
<circle cx="726.32" cy="304.90" r="1.00" fill="#35c3d0"/>
<circle cx="731.70" cy="304.90" r="1.00" fill="#35c3d0"/>
<circle cx="737.08" cy="304.90" r="1.00" fill="#35c3d0"/>
<circle cx="742.46" cy="304.90" r="1.00" fill="#35c3d0"/>
<circle cx="747.84" cy="304.90" r="1.00" fill="#35c3d0"/>
<circle cx="753.22" cy="304.90" r="1.00" fill="#35c3d0"/>
<circle cx="758.60" cy="304.90" r="1.00" fill="#35c3d0"/>
<circle cx="763.98" cy="304.90" r="1.00" fill="#35c3d0"/>
<circle cx="769.36" cy="304.90" r="1.00" fill="#35c3d0"/>
<circle cx="774.74" cy="304.90" r="1.00" fill="#35c3d0"/>
<circle cx="780.12" cy="304.90" r="1.00" fill="#35c3d0"/>
<circle cx="785.50" cy="304.90" r="1.00" fill="#35c3d0"/>
<circle cx="790.88" cy="304.90" r="1.00" fill="#35c3d0"/>
<circle cx="796.26" cy="304.90" r="1.00" fill="#35c3d0"/>
<circle cx="801.64" cy="304.90" r="1.00" fill="#35c3d0"/>
<circle cx="807.02" cy="304.90" r="1.00" fill="#35c3d0"/>
<circle cx="812.40" cy="304.90" r="1.00" fill="#35c3d0"/>
<circle cx="817.78" cy="304.90" r="1.00" fill="#35c3d0"/>
<circle cx="823.16" cy="304.90" r="1.00" fill="#35c3d0"/>
<circle cx="828.54" cy="299.56" r="1.00" fill="#35c3d0"/>
<circle cx="833.92" cy="299.29" r="1.00" fill="#35c3d0"/>
<circle cx="839.30" cy="299.29" r="1.00" fill="#35c3d0"/>
<circle cx="844.68" cy="299.29" r="1.00" fill="#35c3d0"/>
<circle cx="850.06" cy="299.29" r="1.00" fill="#35c3d0"/>
<circle cx="855.44" cy="299.29" r="1.00" fill="#35c3d0"/>
<circle cx="860.82" cy="299.29" r="1.00" fill="#35c3d0"/>
<circle cx="866.20" cy="299.29" r="1.00" fill="#35c3d0"/>
<circle cx="871.58" cy="299.29" r="1.00" fill="#35c3d0"/>
<circle cx="876.96" cy="299.29" r="1.00" fill="#35c3d0"/>
<circle cx="882.34" cy="299.29" r="1.00" fill="#35c3d0"/>
<circle cx="887.72" cy="299.29" r="1.00" fill="#35c3d0"/>
<circle cx="893.10" cy="299.29" r="1.00" fill="#35c3d0"/>
<circle cx="898.48" cy="299.29" r="1.00" fill="#35c3d0"/>
<circle cx="903.86" cy="299.29" r="1.00" fill="#35c3d0"/>
<circle cx="909.24" cy="299.29" r="1.00" fill="#35c3d0"/>
<circle cx="914.62" cy="299.29" r="1.00" fill="#35c3d0"/>
<circle cx="920.00" cy="299.29" r="1.00" fill="#35c3d0"/>
<circle cx="925.38" cy="210.91" r="1.00" fill="#35c3d0"/>
<circle cx="930.76" cy="212.52" r="1.00" fill="#35c3d0"/>
<circle cx="936.14" cy="212.52" r="1.00" fill="#35c3d0"/>
<circle cx="941.52" cy="212.52" r="1.00" fill="#35c3d0"/>
<circle cx="946.90" cy="212.52" r="1.00" fill="#35c3d0"/>
<circle cx="952.28" cy="212.52" r="1.00" fill="#35c3d0"/>
<circle cx="957.66" cy="212.52" r="1.00" fill="#35c3d0"/>
<circle cx="963.04" cy="211.98" r="1.00" fill="#35c3d0"/>
<circle cx="968.42" cy="211.45" r="1.00" fill="#35c3d0"/>
<circle cx="973.80" cy="202.37" r="1.00" fill="#35c3d0"/>
<circle cx="979.18" cy="201.30" r="1.00" fill="#35c3d0"/>
<circle cx="984.56" cy="202.37" r="1.00" fill="#35c3d0"/>
<circle cx="989.94" cy="202.90" r="1.00" fill="#35c3d0"/>
<circle cx="995.32" cy="203.17" r="1.00" fill="#35c3d0"/>
<circle cx="1000.70" cy="202.90" r="1.00" fill="#35c3d0"/>
<circle cx="1006.08" cy="202.90" r="1.00" fill="#35c3d0"/>
<circle cx="1011.46" cy="202.90" r="1.00" fill="#35c3d0"/>
<circle cx="1016.84" cy="202.37" r="1.00" fill="#35c3d0"/>
<circle cx="1022.22" cy="201.84" r="1.00" fill="#35c3d0"/>
<circle cx="1027.60" cy="201.57" r="1.00" fill="#35c3d0"/>
<circle cx="1032.98" cy="200.77" r="1.00" fill="#35c3d0"/>
<circle cx="1038.36" cy="201.84" r="1.00" fill="#35c3d0"/>
<circle cx="1043.74" cy="202.37" r="1.00" fill="#35c3d0"/>
<circle cx="1054.50" cy="202.37" r="1.40" fill="#35c3d0"/>
<path d="M651.00 298.49 C651.00 298.49 651.85 270.19 656.38 270.19 C657.23 270.19 660.90 270.19 661.76 270.72 C666.28 273.52 662.62 298.49 667.14 298.49 C668.00 298.49 669.83 298.49 672.52 298.49 C675.21 298.49 675.21 298.49 677.90 298.49 C680.59 298.49 680.59 298.49 683.28 298.49 C685.97 298.49 685.97 298.49 688.66 298.49 C691.35 298.49 691.35 298.49 694.04 298.49 C696.73 298.49 696.73 298.49 699.42 298.49 C702.11 298.49 702.11 298.49 704.80 298.49 C707.49 298.49 709.33 298.49 710.18 298.49 C714.71 298.49 712.87 270.19 715.56 270.19 C718.25 270.19 716.41 298.49 720.94 298.49 C721.79 298.49 723.63 298.49 726.32 298.49 C729.01 298.49 729.01 298.49 731.70 298.49 C734.39 298.49 734.39 298.49 737.08 298.49 C739.77 298.49 739.77 298.49 742.46 298.49 C745.15 298.49 745.15 298.49 747.84 298.49 C750.53 298.49 750.53 298.49 753.22 298.49 C755.91 298.49 755.91 298.49 758.60 298.49 C761.29 298.49 761.29 298.49 763.98 298.49 C766.67 298.49 766.67 298.49 769.36 298.49 C772.05 298.49 772.05 298.49 774.74 298.49 C777.43 298.49 777.43 298.49 780.12 298.49 C782.81 298.49 782.81 298.49 785.50 298.49 C788.19 298.49 788.19 298.49 790.88 298.49 C793.57 298.49 793.57 298.49 796.26 298.49 C798.95 298.49 800.77 298.49 801.64 298.49 C806.15 298.49 804.33 271.26 807.02 271.26 C809.71 271.26 807.89 298.49 812.40 298.49 C813.27 298.49 815.09 298.49 817.78 298.49 C820.47 298.49 820.47 298.49 823.16 298.49 C825.85 298.49 825.85 298.49 828.54 298.49 C831.23 298.49 831.23 298.49 833.92 298.49 C836.61 298.49 836.61 298.49 839.30 298.49 C841.99 298.49 841.99 298.49 844.68 298.49 C847.37 298.49 847.37 298.49 850.06 298.49 C852.75 298.49 852.75 298.49 855.44 298.49 C858.13 298.49 858.13 298.49 860.82 298.49 C863.51 298.49 863.51 298.49 866.20 298.49 C868.89 298.49 868.89 298.49 871.58 298.49 C874.27 298.49 874.27 298.49 876.96 298.49 C879.65 298.49 881.49 298.49 882.34 298.49 C886.87 298.49 883.20 270.19 887.72 270.19 C888.58 270.19 890.41 271.26 893.10 271.26 C895.79 271.26 897.62 270.19 898.48 270.19 C903.00 270.19 899.33 298.49 903.86 298.49 C904.71 298.49 906.55 298.49 909.24 298.49 C911.93 298.49 911.94 298.49 914.62 298.49 C917.32 298.49 918.75 298.49 920.00 297.96 C924.13 296.19 923.38 289.58 925.38 280.87 C928.76 266.09 926.19 250.96 930.76 250.96 C931.57 250.96 933.45 250.96 936.14 250.96 C938.83 250.96 938.84 250.96 941.52 250.96 C944.22 250.96 946.46 251.50 946.90 251.50 C951.84 251.50 949.59 191.69 952.28 191.69 C954.97 191.69 952.72 251.50 957.66 251.50 C958.10 251.50 960.44 250.96 963.04 250.96 C965.82 250.96 965.84 253.10 968.42 253.10 C971.22 253.10 972.31 252.48 973.80 249.90 C977.69 243.13 977.21 234.41 979.18 234.41 C982.59 234.41 980.04 262.18 984.56 262.18 C985.42 262.18 987.24 261.64 989.94 261.64 C992.62 261.64 992.63 261.64 995.32 261.64 C998.01 261.64 1000.27 261.64 1000.70 261.64 C1005.65 261.64 1003.40 200.23 1006.08 200.23 C1008.78 200.23 1006.51 256.04 1011.46 262.18 C1011.89 262.71 1014.14 262.71 1016.84 262.71 C1019.52 262.71 1019.53 262.71 1022.22 262.71 C1024.91 262.71 1024.91 262.71 1027.60 262.71 C1030.29 262.71 1030.29 262.71 1032.98 262.71 C1035.67 262.71 1035.67 262.71 1038.36 262.71 C1041.05 262.71 1043.74 262.71 1043.74 262.71" fill="none" stroke="#d9a6ee" stroke-width="1.25" stroke-linejoin="round"/>
<circle cx="651.00" cy="298.49" r="1.00" fill="#d9a6ee"/>
<circle cx="656.38" cy="270.19" r="1.00" fill="#d9a6ee"/>
<circle cx="661.76" cy="270.72" r="1.00" fill="#d9a6ee"/>
<circle cx="667.14" cy="298.49" r="1.00" fill="#d9a6ee"/>
<circle cx="672.52" cy="298.49" r="1.00" fill="#d9a6ee"/>
<circle cx="677.90" cy="298.49" r="1.00" fill="#d9a6ee"/>
<circle cx="683.28" cy="298.49" r="1.00" fill="#d9a6ee"/>
<circle cx="688.66" cy="298.49" r="1.00" fill="#d9a6ee"/>
<circle cx="694.04" cy="298.49" r="1.00" fill="#d9a6ee"/>
<circle cx="699.42" cy="298.49" r="1.00" fill="#d9a6ee"/>
<circle cx="704.80" cy="298.49" r="1.00" fill="#d9a6ee"/>
<circle cx="710.18" cy="298.49" r="1.00" fill="#d9a6ee"/>
<circle cx="715.56" cy="270.19" r="1.00" fill="#d9a6ee"/>
<circle cx="720.94" cy="298.49" r="1.00" fill="#d9a6ee"/>
<circle cx="726.32" cy="298.49" r="1.00" fill="#d9a6ee"/>
<circle cx="731.70" cy="298.49" r="1.00" fill="#d9a6ee"/>
<circle cx="737.08" cy="298.49" r="1.00" fill="#d9a6ee"/>
<circle cx="742.46" cy="298.49" r="1.00" fill="#d9a6ee"/>
<circle cx="747.84" cy="298.49" r="1.00" fill="#d9a6ee"/>
<circle cx="753.22" cy="298.49" r="1.00" fill="#d9a6ee"/>
<circle cx="758.60" cy="298.49" r="1.00" fill="#d9a6ee"/>
<circle cx="763.98" cy="298.49" r="1.00" fill="#d9a6ee"/>
<circle cx="769.36" cy="298.49" r="1.00" fill="#d9a6ee"/>
<circle cx="774.74" cy="298.49" r="1.00" fill="#d9a6ee"/>
<circle cx="780.12" cy="298.49" r="1.00" fill="#d9a6ee"/>
<circle cx="785.50" cy="298.49" r="1.00" fill="#d9a6ee"/>
<circle cx="790.88" cy="298.49" r="1.00" fill="#d9a6ee"/>
<circle cx="796.26" cy="298.49" r="1.00" fill="#d9a6ee"/>
<circle cx="801.64" cy="298.49" r="1.00" fill="#d9a6ee"/>
<circle cx="807.02" cy="271.26" r="1.00" fill="#d9a6ee"/>
<circle cx="812.40" cy="298.49" r="1.00" fill="#d9a6ee"/>
<circle cx="817.78" cy="298.49" r="1.00" fill="#d9a6ee"/>
<circle cx="823.16" cy="298.49" r="1.00" fill="#d9a6ee"/>
<circle cx="828.54" cy="298.49" r="1.00" fill="#d9a6ee"/>
<circle cx="833.92" cy="298.49" r="1.00" fill="#d9a6ee"/>
<circle cx="839.30" cy="298.49" r="1.00" fill="#d9a6ee"/>
<circle cx="844.68" cy="298.49" r="1.00" fill="#d9a6ee"/>
<circle cx="850.06" cy="298.49" r="1.00" fill="#d9a6ee"/>
<circle cx="855.44" cy="298.49" r="1.00" fill="#d9a6ee"/>
<circle cx="860.82" cy="298.49" r="1.00" fill="#d9a6ee"/>
<circle cx="866.20" cy="298.49" r="1.00" fill="#d9a6ee"/>
<circle cx="871.58" cy="298.49" r="1.00" fill="#d9a6ee"/>
<circle cx="876.96" cy="298.49" r="1.00" fill="#d9a6ee"/>
<circle cx="882.34" cy="298.49" r="1.00" fill="#d9a6ee"/>
<circle cx="887.72" cy="270.19" r="1.00" fill="#d9a6ee"/>
<circle cx="893.10" cy="271.26" r="1.00" fill="#d9a6ee"/>
<circle cx="898.48" cy="270.19" r="1.00" fill="#d9a6ee"/>
<circle cx="903.86" cy="298.49" r="1.00" fill="#d9a6ee"/>
<circle cx="909.24" cy="298.49" r="1.00" fill="#d9a6ee"/>
<circle cx="914.62" cy="298.49" r="1.00" fill="#d9a6ee"/>
<circle cx="920.00" cy="297.96" r="1.00" fill="#d9a6ee"/>
<circle cx="925.38" cy="280.87" r="1.00" fill="#d9a6ee"/>
<circle cx="930.76" cy="250.96" r="1.00" fill="#d9a6ee"/>
<circle cx="936.14" cy="250.96" r="1.00" fill="#d9a6ee"/>
<circle cx="941.52" cy="250.96" r="1.00" fill="#d9a6ee"/>
<circle cx="946.90" cy="251.50" r="1.00" fill="#d9a6ee"/>
<circle cx="952.28" cy="191.69" r="1.00" fill="#d9a6ee"/>
<circle cx="957.66" cy="251.50" r="1.00" fill="#d9a6ee"/>
<circle cx="963.04" cy="250.96" r="1.00" fill="#d9a6ee"/>
<circle cx="968.42" cy="253.10" r="1.00" fill="#d9a6ee"/>
<circle cx="973.80" cy="249.90" r="1.00" fill="#d9a6ee"/>
<circle cx="979.18" cy="234.41" r="1.00" fill="#d9a6ee"/>
<circle cx="984.56" cy="262.18" r="1.00" fill="#d9a6ee"/>
<circle cx="989.94" cy="261.64" r="1.00" fill="#d9a6ee"/>
<circle cx="995.32" cy="261.64" r="1.00" fill="#d9a6ee"/>
<circle cx="1000.70" cy="261.64" r="1.00" fill="#d9a6ee"/>
<circle cx="1006.08" cy="200.23" r="1.00" fill="#d9a6ee"/>
<circle cx="1011.46" cy="262.18" r="1.00" fill="#d9a6ee"/>
<circle cx="1016.84" cy="262.71" r="1.00" fill="#d9a6ee"/>
<circle cx="1022.22" cy="262.71" r="1.00" fill="#d9a6ee"/>
<circle cx="1027.60" cy="262.71" r="1.00" fill="#d9a6ee"/>
<circle cx="1032.98" cy="262.71" r="1.00" fill="#d9a6ee"/>
<circle cx="1038.36" cy="262.71" r="1.00" fill="#d9a6ee"/>
<circle cx="1043.74" cy="262.71" r="1.00" fill="#d9a6ee"/>
<circle cx="1054.50" cy="262.18" r="1.40" fill="#d9a6ee"/>
<path d="M651.00 291.55 C651.00 291.55 652.95 296.88 656.38 300.63 C658.33 302.76 659.64 303.30 661.76 303.30 C665.02 303.30 664.45 295.82 667.14 295.82 C669.83 295.82 670.85 303.30 672.52 303.30 C676.23 303.30 674.65 283.54 677.90 283.54 C680.03 283.54 680.09 289.96 683.28 295.82 C685.47 299.84 685.26 303.30 688.66 303.30 C690.64 303.30 692.06 303.30 694.04 303.30 C697.44 303.30 697.28 299.86 699.42 295.82 C702.66 289.72 702.66 283.00 704.80 283.00 C708.04 283.00 706.18 303.30 710.18 303.30 C711.56 303.30 712.87 298.49 715.56 298.49 C718.25 298.49 718.92 303.30 720.94 303.30 C724.30 303.30 722.79 292.62 726.32 292.62 C728.17 292.62 729.01 295.82 731.70 295.82 C734.39 295.82 735.23 292.62 737.08 292.62 C740.61 292.62 739.42 303.30 742.46 303.30 C744.80 303.30 745.15 295.82 747.84 295.82 C750.53 295.82 749.82 303.30 753.22 303.30 C755.20 303.30 757.43 303.30 758.60 303.30 C762.81 303.30 761.29 284.61 763.98 284.61 C766.67 284.61 766.03 303.30 769.36 303.30 C771.41 303.30 771.21 292.62 774.74 292.62 C776.59 292.62 777.94 293.66 780.12 295.82 C783.32 299.00 782.10 303.30 785.50 303.30 C787.48 303.30 789.69 303.30 790.88 303.30 C795.07 303.30 792.86 285.14 796.26 285.14 C798.24 285.14 798.83 290.02 801.64 294.75 C804.21 299.09 804.21 303.30 807.02 303.30 C809.59 303.30 809.71 295.82 812.40 295.82 C815.09 295.82 814.38 303.30 817.78 303.30 C819.76 303.30 821.92 303.30 823.16 303.30 C827.30 303.30 824.41 286.21 828.54 286.21 C829.79 286.21 831.62 286.21 833.92 286.74 C837.00 287.45 836.22 290.84 839.30 291.55 C841.60 292.08 843.28 292.08 844.68 292.08 C848.66 292.08 846.63 277.66 850.06 277.66 C852.01 277.66 852.88 281.04 855.44 284.61 C858.26 288.52 857.87 292.62 860.82 292.62 C863.25 292.62 863.22 286.74 866.20 286.74 C868.60 286.74 869.15 290.21 871.58 290.21 C874.53 290.21 873.88 284.61 876.96 284.61 C879.26 284.61 879.61 286.74 882.34 286.74 C884.99 286.74 885.68 285.14 887.72 285.14 C891.06 285.14 890.15 292.62 893.10 292.62 C895.53 292.62 895.48 289.51 898.48 287.28 C900.86 285.51 901.80 284.61 903.86 284.61 C907.18 284.61 906.61 292.62 909.24 292.62 C911.99 292.62 911.36 284.07 914.62 284.07 C916.74 284.07 919.58 287.81 920.00 287.81 C924.96 287.81 920.45 248.49 925.38 211.45 C925.83 208.04 928.20 209.32 930.76 206.91 C933.58 204.25 932.99 202.82 936.14 201.30 C938.37 200.23 940.29 200.23 941.52 200.23 C945.67 200.23 945.18 217.86 946.90 217.86 C950.56 217.86 949.96 178.87 952.28 178.87 C955.34 178.87 953.38 230.67 957.66 230.67 C958.76 230.67 959.28 223.34 963.04 218.39 C964.66 216.25 966.16 216.25 968.42 216.25 C971.54 216.25 971.11 222.13 973.80 222.13 C976.49 222.13 977.10 216.25 979.18 216.25 C982.48 216.25 982.74 227.74 984.56 227.74 C988.12 227.74 985.58 203.44 989.94 203.44 C990.96 203.44 993.06 203.89 995.32 205.57 C998.44 207.89 999.32 211.45 1000.70 211.45 C1004.70 211.45 1003.93 189.02 1006.08 189.02 C1009.31 189.02 1006.94 223.20 1011.46 223.20 C1012.32 223.20 1014.03 221.13 1016.84 219.46 C1019.41 217.93 1019.39 216.79 1022.22 216.79 C1024.77 216.79 1025.90 216.79 1027.60 217.32 C1031.28 218.48 1031.15 227.74 1032.98 227.74 C1036.53 227.74 1035.23 205.57 1038.36 205.57 C1040.61 205.57 1043.74 221.06 1043.74 221.06" fill="none" stroke="#b23a3c" stroke-width="1.45" stroke-linejoin="round"/>
<circle cx="651.00" cy="291.55" r="1.00" fill="#b23a3c"/>
<circle cx="656.38" cy="300.63" r="1.00" fill="#b23a3c"/>
<circle cx="661.76" cy="303.30" r="1.00" fill="#b23a3c"/>
<circle cx="667.14" cy="295.82" r="1.00" fill="#b23a3c"/>
<circle cx="672.52" cy="303.30" r="1.00" fill="#b23a3c"/>
<circle cx="677.90" cy="283.54" r="1.00" fill="#b23a3c"/>
<circle cx="683.28" cy="295.82" r="1.00" fill="#b23a3c"/>
<circle cx="688.66" cy="303.30" r="1.00" fill="#b23a3c"/>
<circle cx="694.04" cy="303.30" r="1.00" fill="#b23a3c"/>
<circle cx="699.42" cy="295.82" r="1.00" fill="#b23a3c"/>
<circle cx="704.80" cy="283.00" r="1.00" fill="#b23a3c"/>
<circle cx="710.18" cy="303.30" r="1.00" fill="#b23a3c"/>
<circle cx="715.56" cy="298.49" r="1.00" fill="#b23a3c"/>
<circle cx="720.94" cy="303.30" r="1.00" fill="#b23a3c"/>
<circle cx="726.32" cy="292.62" r="1.00" fill="#b23a3c"/>
<circle cx="731.70" cy="295.82" r="1.00" fill="#b23a3c"/>
<circle cx="737.08" cy="292.62" r="1.00" fill="#b23a3c"/>
<circle cx="742.46" cy="303.30" r="1.00" fill="#b23a3c"/>
<circle cx="747.84" cy="295.82" r="1.00" fill="#b23a3c"/>
<circle cx="753.22" cy="303.30" r="1.00" fill="#b23a3c"/>
<circle cx="758.60" cy="303.30" r="1.00" fill="#b23a3c"/>
<circle cx="763.98" cy="284.61" r="1.00" fill="#b23a3c"/>
<circle cx="769.36" cy="303.30" r="1.00" fill="#b23a3c"/>
<circle cx="774.74" cy="292.62" r="1.00" fill="#b23a3c"/>
<circle cx="780.12" cy="295.82" r="1.00" fill="#b23a3c"/>
<circle cx="785.50" cy="303.30" r="1.00" fill="#b23a3c"/>
<circle cx="790.88" cy="303.30" r="1.00" fill="#b23a3c"/>
<circle cx="796.26" cy="285.14" r="1.00" fill="#b23a3c"/>
<circle cx="801.64" cy="294.75" r="1.00" fill="#b23a3c"/>
<circle cx="807.02" cy="303.30" r="1.00" fill="#b23a3c"/>
<circle cx="812.40" cy="295.82" r="1.00" fill="#b23a3c"/>
<circle cx="817.78" cy="303.30" r="1.00" fill="#b23a3c"/>
<circle cx="823.16" cy="303.30" r="1.00" fill="#b23a3c"/>
<circle cx="828.54" cy="286.21" r="1.00" fill="#b23a3c"/>
<circle cx="833.92" cy="286.74" r="1.00" fill="#b23a3c"/>
<circle cx="839.30" cy="291.55" r="1.00" fill="#b23a3c"/>
<circle cx="844.68" cy="292.08" r="1.00" fill="#b23a3c"/>
<circle cx="850.06" cy="277.66" r="1.00" fill="#b23a3c"/>
<circle cx="855.44" cy="284.61" r="1.00" fill="#b23a3c"/>
<circle cx="860.82" cy="292.62" r="1.00" fill="#b23a3c"/>
<circle cx="866.20" cy="286.74" r="1.00" fill="#b23a3c"/>
<circle cx="871.58" cy="290.21" r="1.00" fill="#b23a3c"/>
<circle cx="876.96" cy="284.61" r="1.00" fill="#b23a3c"/>
<circle cx="882.34" cy="286.74" r="1.00" fill="#b23a3c"/>
<circle cx="887.72" cy="285.14" r="1.00" fill="#b23a3c"/>
<circle cx="893.10" cy="292.62" r="1.00" fill="#b23a3c"/>
<circle cx="898.48" cy="287.28" r="1.00" fill="#b23a3c"/>
<circle cx="903.86" cy="284.61" r="1.00" fill="#b23a3c"/>
<circle cx="909.24" cy="292.62" r="1.00" fill="#b23a3c"/>
<circle cx="914.62" cy="284.07" r="1.00" fill="#b23a3c"/>
<circle cx="920.00" cy="287.81" r="1.00" fill="#b23a3c"/>
<circle cx="925.38" cy="211.45" r="1.00" fill="#b23a3c"/>
<circle cx="930.76" cy="206.91" r="1.00" fill="#b23a3c"/>
<circle cx="936.14" cy="201.30" r="1.00" fill="#b23a3c"/>
<circle cx="941.52" cy="200.23" r="1.00" fill="#b23a3c"/>
<circle cx="946.90" cy="217.86" r="1.00" fill="#b23a3c"/>
<circle cx="952.28" cy="178.87" r="1.00" fill="#b23a3c"/>
<circle cx="957.66" cy="230.67" r="1.00" fill="#b23a3c"/>
<circle cx="963.04" cy="218.39" r="1.00" fill="#b23a3c"/>
<circle cx="968.42" cy="216.25" r="1.00" fill="#b23a3c"/>
<circle cx="973.80" cy="222.13" r="1.00" fill="#b23a3c"/>
<circle cx="979.18" cy="216.25" r="1.00" fill="#b23a3c"/>
<circle cx="984.56" cy="227.74" r="1.00" fill="#b23a3c"/>
<circle cx="989.94" cy="203.44" r="1.00" fill="#b23a3c"/>
<circle cx="995.32" cy="205.57" r="1.00" fill="#b23a3c"/>
<circle cx="1000.70" cy="211.45" r="1.00" fill="#b23a3c"/>
<circle cx="1006.08" cy="189.02" r="1.00" fill="#b23a3c"/>
<circle cx="1011.46" cy="223.20" r="1.00" fill="#b23a3c"/>
<circle cx="1016.84" cy="219.46" r="1.00" fill="#b23a3c"/>
<circle cx="1022.22" cy="216.79" r="1.00" fill="#b23a3c"/>
<circle cx="1027.60" cy="217.32" r="1.00" fill="#b23a3c"/>
<circle cx="1032.98" cy="227.74" r="1.00" fill="#b23a3c"/>
<circle cx="1038.36" cy="205.57" r="1.00" fill="#b23a3c"/>
<circle cx="1043.74" cy="221.06" r="1.00" fill="#b23a3c"/>
<circle cx="1054.50" cy="227.47" r="1.40" fill="#b23a3c"/>
<text x="189.7" y="536.7" text-anchor="end" class="tk">0</text>
<line x1="198.6" y1="505.5" x2="596.0" y2="505.5" stroke="#8f8f8f" stroke-width="1" stroke-dasharray="2 2"/>
<text x="189.7" y="507.7" text-anchor="end" class="tk">0.2</text>
<line x1="198.6" y1="476.5" x2="596.0" y2="476.5" stroke="#8f8f8f" stroke-width="1" stroke-dasharray="2 2"/>
<text x="189.7" y="478.7" text-anchor="end" class="tk">0.4</text>
<line x1="198.6" y1="447.5" x2="596.0" y2="447.5" stroke="#8f8f8f" stroke-width="1" stroke-dasharray="2 2"/>
<text x="189.7" y="449.7" text-anchor="end" class="tk">0.6</text>
<line x1="198.6" y1="418.5" x2="596.0" y2="418.5" stroke="#8f8f8f" stroke-width="1" stroke-dasharray="2 2"/>
<text x="189.7" y="420.7" text-anchor="end" class="tk">0.8</text>
<line x1="198.6" y1="389.5" x2="596.0" y2="389.5" stroke="#8f8f8f" stroke-width="1" stroke-dasharray="2 2"/>
<text x="189.7" y="391.7" text-anchor="end" class="tk">1</text>
<text x="195.0" y="544.9" text-anchor="middle" class="tk">00:00</text>
<text x="221.7" y="544.9" text-anchor="middle" class="tk">01:15</text>
<text x="248.5" y="544.9" text-anchor="middle" class="tk">02:30</text>
<text x="275.2" y="544.9" text-anchor="middle" class="tk">03:45</text>
<text x="301.9" y="544.9" text-anchor="middle" class="tk">05:00</text>
<text x="328.7" y="544.9" text-anchor="middle" class="tk">06:15</text>
<text x="355.4" y="544.9" text-anchor="middle" class="tk">07:30</text>
<text x="382.1" y="544.9" text-anchor="middle" class="tk">08:45</text>
<text x="408.9" y="544.9" text-anchor="middle" class="tk">10:00</text>
<text x="435.6" y="544.9" text-anchor="middle" class="tk">11:15</text>
<text x="462.3" y="544.9" text-anchor="middle" class="tk">12:30</text>
<text x="489.1" y="544.9" text-anchor="middle" class="tk">13:45</text>
<text x="515.8" y="544.9" text-anchor="middle" class="tk">15:00</text>
<text x="542.5" y="544.9" text-anchor="middle" class="tk">16:15</text>
<text x="569.3" y="544.9" text-anchor="middle" class="tk">17:30</text>
<text x="596.0" y="544.9" text-anchor="middle" class="tk">18:37</text>
<path d="M195.0 388.5 L195.0 534.5 L596.0 534.5" fill="none" stroke="#4f596b" stroke-width="1.6"/>
<path d="M195.00 534.50 C195.00 534.50 197.67 534.50 200.35 534.50 C203.02 534.50 203.02 534.50 205.69 534.50 C208.37 534.50 208.37 534.50 211.04 534.50 C213.71 534.50 213.71 534.50 216.39 534.50 C219.06 534.50 219.06 534.50 221.73 534.50 C224.41 534.50 224.41 534.50 227.08 534.50 C229.75 534.50 229.75 534.50 232.43 534.50 C235.10 534.50 235.10 534.50 237.77 534.50 C240.45 534.50 240.45 534.50 243.12 534.50 C245.79 534.50 245.79 534.50 248.47 534.50 C251.14 534.50 251.14 534.50 253.81 534.50 C256.49 534.50 256.49 534.50 259.16 534.50 C261.83 534.50 261.83 534.50 264.51 534.50 C267.18 534.50 267.18 534.50 269.85 534.50 C272.53 534.50 272.53 534.50 275.20 534.50 C277.87 534.50 277.87 534.50 280.55 534.50 C283.22 534.50 283.22 534.50 285.89 534.50 C288.57 534.50 288.57 534.50 291.24 534.50 C293.91 534.50 293.91 534.50 296.59 534.50 C299.26 534.50 299.26 534.50 301.93 534.50 C304.61 534.50 304.61 534.50 307.28 534.50 C309.95 534.50 309.95 534.50 312.63 534.50 C315.30 534.50 315.30 534.50 317.97 534.50 C320.65 534.50 320.65 534.50 323.32 534.50 C325.99 534.50 325.99 534.50 328.67 534.50 C331.34 534.50 331.34 534.50 334.01 534.50 C336.69 534.50 336.69 534.50 339.36 534.50 C342.03 534.50 342.03 534.50 344.71 534.50 C347.38 534.50 347.38 534.50 350.05 534.50 C352.73 534.50 352.73 534.50 355.40 534.50 C358.07 534.50 358.07 534.50 360.75 534.50 C363.42 534.50 363.42 534.50 366.09 534.50 C368.77 534.50 368.77 534.50 371.44 534.50 C374.11 534.50 374.11 534.50 376.79 534.50 C379.46 534.50 379.46 534.50 382.13 534.50 C384.81 534.50 384.81 534.50 387.48 534.50 C390.15 534.50 390.15 534.50 392.83 534.50 C395.50 534.50 395.50 534.50 398.17 534.50 C400.85 534.50 400.85 534.50 403.52 534.50 C406.19 534.50 406.19 534.50 408.87 534.50 C411.54 534.50 411.54 534.50 414.21 534.50 C416.89 534.50 416.89 534.50 419.56 534.50 C422.23 534.50 422.23 534.50 424.91 534.50 C427.58 534.50 427.58 534.50 430.25 534.50 C432.93 534.50 432.93 534.50 435.60 534.50 C438.27 534.50 438.27 534.50 440.95 534.50 C443.62 534.50 443.62 534.50 446.29 534.50 C448.97 534.50 448.97 534.50 451.64 534.50 C454.31 534.50 454.31 534.50 456.99 534.50 C459.66 534.50 459.66 534.50 462.33 534.50 C465.01 534.50 465.01 534.50 467.68 534.50 C470.35 534.50 470.35 534.50 473.03 534.50 C475.70 534.50 475.70 534.50 478.37 534.50 C481.05 534.50 481.05 534.50 483.72 534.50 C486.39 534.50 486.39 534.50 489.07 534.50 C491.74 534.50 491.74 534.50 494.41 534.50 C497.09 534.50 497.09 534.50 499.76 534.50 C502.43 534.50 502.43 534.50 505.11 534.50 C507.78 534.50 507.78 534.50 510.45 534.50 C513.13 534.50 513.13 534.50 515.80 534.50 C518.47 534.50 518.47 534.50 521.15 534.50 C523.82 534.50 523.82 534.50 526.49 534.50 C529.17 534.50 529.17 534.50 531.84 534.50 C534.51 534.50 534.51 534.50 537.19 534.50 C539.86 534.50 539.86 534.50 542.53 534.50 C545.21 534.50 545.21 534.50 547.88 534.50 C550.55 534.50 550.55 534.50 553.23 534.50 C555.90 534.50 555.90 534.50 558.57 534.50 C561.25 534.50 561.25 534.50 563.92 534.50 C566.59 534.50 566.59 534.50 569.27 534.50 C571.94 534.50 571.94 534.50 574.61 534.50 C577.29 534.50 577.29 534.50 579.96 534.50 C582.63 534.50 585.31 534.50 585.31 534.50" fill="none" stroke="#4f7fdb" stroke-width="1.50" stroke-linejoin="round"/>
<circle cx="195.00" cy="534.50" r="1.10" fill="#4f7fdb"/>
<circle cx="200.35" cy="534.50" r="1.10" fill="#4f7fdb"/>
<circle cx="205.69" cy="534.50" r="1.10" fill="#4f7fdb"/>
<circle cx="211.04" cy="534.50" r="1.10" fill="#4f7fdb"/>
<circle cx="216.39" cy="534.50" r="1.10" fill="#4f7fdb"/>
<circle cx="221.73" cy="534.50" r="1.10" fill="#4f7fdb"/>
<circle cx="227.08" cy="534.50" r="1.10" fill="#4f7fdb"/>
<circle cx="232.43" cy="534.50" r="1.10" fill="#4f7fdb"/>
<circle cx="237.77" cy="534.50" r="1.10" fill="#4f7fdb"/>
<circle cx="243.12" cy="534.50" r="1.10" fill="#4f7fdb"/>
<circle cx="248.47" cy="534.50" r="1.10" fill="#4f7fdb"/>
<circle cx="253.81" cy="534.50" r="1.10" fill="#4f7fdb"/>
<circle cx="259.16" cy="534.50" r="1.10" fill="#4f7fdb"/>
<circle cx="264.51" cy="534.50" r="1.10" fill="#4f7fdb"/>
<circle cx="269.85" cy="534.50" r="1.10" fill="#4f7fdb"/>
<circle cx="275.20" cy="534.50" r="1.10" fill="#4f7fdb"/>
<circle cx="280.55" cy="534.50" r="1.10" fill="#4f7fdb"/>
<circle cx="285.89" cy="534.50" r="1.10" fill="#4f7fdb"/>
<circle cx="291.24" cy="534.50" r="1.10" fill="#4f7fdb"/>
<circle cx="296.59" cy="534.50" r="1.10" fill="#4f7fdb"/>
<circle cx="301.93" cy="534.50" r="1.10" fill="#4f7fdb"/>
<circle cx="307.28" cy="534.50" r="1.10" fill="#4f7fdb"/>
<circle cx="312.63" cy="534.50" r="1.10" fill="#4f7fdb"/>
<circle cx="317.97" cy="534.50" r="1.10" fill="#4f7fdb"/>
<circle cx="323.32" cy="534.50" r="1.10" fill="#4f7fdb"/>
<circle cx="328.67" cy="534.50" r="1.10" fill="#4f7fdb"/>
<circle cx="334.01" cy="534.50" r="1.10" fill="#4f7fdb"/>
<circle cx="339.36" cy="534.50" r="1.10" fill="#4f7fdb"/>
<circle cx="344.71" cy="534.50" r="1.10" fill="#4f7fdb"/>
<circle cx="350.05" cy="534.50" r="1.10" fill="#4f7fdb"/>
<circle cx="355.40" cy="534.50" r="1.10" fill="#4f7fdb"/>
<circle cx="360.75" cy="534.50" r="1.10" fill="#4f7fdb"/>
<circle cx="366.09" cy="534.50" r="1.10" fill="#4f7fdb"/>
<circle cx="371.44" cy="534.50" r="1.10" fill="#4f7fdb"/>
<circle cx="376.79" cy="534.50" r="1.10" fill="#4f7fdb"/>
<circle cx="382.13" cy="534.50" r="1.10" fill="#4f7fdb"/>
<circle cx="387.48" cy="534.50" r="1.10" fill="#4f7fdb"/>
<circle cx="392.83" cy="534.50" r="1.10" fill="#4f7fdb"/>
<circle cx="398.17" cy="534.50" r="1.10" fill="#4f7fdb"/>
<circle cx="403.52" cy="534.50" r="1.10" fill="#4f7fdb"/>
<circle cx="408.87" cy="534.50" r="1.10" fill="#4f7fdb"/>
<circle cx="414.21" cy="534.50" r="1.10" fill="#4f7fdb"/>
<circle cx="419.56" cy="534.50" r="1.10" fill="#4f7fdb"/>
<circle cx="424.91" cy="534.50" r="1.10" fill="#4f7fdb"/>
<circle cx="430.25" cy="534.50" r="1.10" fill="#4f7fdb"/>
<circle cx="435.60" cy="534.50" r="1.10" fill="#4f7fdb"/>
<circle cx="440.95" cy="534.50" r="1.10" fill="#4f7fdb"/>
<circle cx="446.29" cy="534.50" r="1.10" fill="#4f7fdb"/>
<circle cx="451.64" cy="534.50" r="1.10" fill="#4f7fdb"/>
<circle cx="456.99" cy="534.50" r="1.10" fill="#4f7fdb"/>
<circle cx="462.33" cy="534.50" r="1.10" fill="#4f7fdb"/>
<circle cx="467.68" cy="534.50" r="1.10" fill="#4f7fdb"/>
<circle cx="473.03" cy="534.50" r="1.10" fill="#4f7fdb"/>
<circle cx="478.37" cy="534.50" r="1.10" fill="#4f7fdb"/>
<circle cx="483.72" cy="534.50" r="1.10" fill="#4f7fdb"/>
<circle cx="489.07" cy="534.50" r="1.10" fill="#4f7fdb"/>
<circle cx="494.41" cy="534.50" r="1.10" fill="#4f7fdb"/>
<circle cx="499.76" cy="534.50" r="1.10" fill="#4f7fdb"/>
<circle cx="505.11" cy="534.50" r="1.10" fill="#4f7fdb"/>
<circle cx="510.45" cy="534.50" r="1.10" fill="#4f7fdb"/>
<circle cx="515.80" cy="534.50" r="1.10" fill="#4f7fdb"/>
<circle cx="521.15" cy="534.50" r="1.10" fill="#4f7fdb"/>
<circle cx="526.49" cy="534.50" r="1.10" fill="#4f7fdb"/>
<circle cx="531.84" cy="534.50" r="1.10" fill="#4f7fdb"/>
<circle cx="537.19" cy="534.50" r="1.10" fill="#4f7fdb"/>
<circle cx="542.53" cy="534.50" r="1.10" fill="#4f7fdb"/>
<circle cx="547.88" cy="534.50" r="1.10" fill="#4f7fdb"/>
<circle cx="553.23" cy="534.50" r="1.10" fill="#4f7fdb"/>
<circle cx="558.57" cy="534.50" r="1.10" fill="#4f7fdb"/>
<circle cx="563.92" cy="534.50" r="1.10" fill="#4f7fdb"/>
<circle cx="569.27" cy="534.50" r="1.10" fill="#4f7fdb"/>
<circle cx="574.61" cy="534.50" r="1.10" fill="#4f7fdb"/>
<circle cx="579.96" cy="534.50" r="1.10" fill="#4f7fdb"/>
<circle cx="585.31" cy="534.50" r="1.10" fill="#4f7fdb"/>
<circle cx="596.00" cy="534.50" r="1.40" fill="#4f7fdb"/>
<text x="650.0" y="536.4" text-anchor="end" class="tk">0</text>
<line x1="658.9" y1="510.1" x2="1053.9" y2="510.1" stroke="#8f8f8f" stroke-width="1" stroke-dasharray="2 2"/>
<text x="650.0" y="512.3" text-anchor="end" class="tk">30</text>
<line x1="658.9" y1="486.0" x2="1053.9" y2="486.0" stroke="#8f8f8f" stroke-width="1" stroke-dasharray="2 2"/>
<text x="650.0" y="488.2" text-anchor="end" class="tk">60</text>
<line x1="658.9" y1="461.9" x2="1053.9" y2="461.9" stroke="#8f8f8f" stroke-width="1" stroke-dasharray="2 2"/>
<text x="650.0" y="464.1" text-anchor="end" class="tk">90</text>
<line x1="658.9" y1="437.7" x2="1053.9" y2="437.7" stroke="#8f8f8f" stroke-width="1" stroke-dasharray="2 2"/>
<text x="650.0" y="439.9" text-anchor="end" class="tk">120</text>
<line x1="658.9" y1="413.6" x2="1053.9" y2="413.6" stroke="#8f8f8f" stroke-width="1" stroke-dasharray="2 2"/>
<text x="650.0" y="415.8" text-anchor="end" class="tk">150</text>
<line x1="658.9" y1="389.5" x2="1053.9" y2="389.5" stroke="#8f8f8f" stroke-width="1" stroke-dasharray="2 2"/>
<text x="650.0" y="391.7" text-anchor="end" class="tk">180</text>
<text x="655.3" y="544.8" text-anchor="middle" class="tk">00:00</text>
<text x="681.9" y="544.8" text-anchor="middle" class="tk">01:15</text>
<text x="708.4" y="544.8" text-anchor="middle" class="tk">02:30</text>
<text x="735.0" y="544.8" text-anchor="middle" class="tk">03:45</text>
<text x="761.6" y="544.8" text-anchor="middle" class="tk">05:00</text>
<text x="788.2" y="544.8" text-anchor="middle" class="tk">06:15</text>
<text x="814.7" y="544.8" text-anchor="middle" class="tk">07:30</text>
<text x="841.3" y="544.8" text-anchor="middle" class="tk">08:45</text>
<text x="867.9" y="544.8" text-anchor="middle" class="tk">10:00</text>
<text x="894.5" y="544.8" text-anchor="middle" class="tk">11:15</text>
<text x="921.0" y="544.8" text-anchor="middle" class="tk">12:30</text>
<text x="947.6" y="544.8" text-anchor="middle" class="tk">13:45</text>
<text x="974.2" y="544.8" text-anchor="middle" class="tk">15:00</text>
<text x="1000.8" y="544.8" text-anchor="middle" class="tk">16:15</text>
<text x="1027.3" y="544.8" text-anchor="middle" class="tk">17:30</text>
<text x="1053.9" y="544.8" text-anchor="middle" class="tk">18:37</text>
<path d="M655.3 388.5 L655.3 534.2 L1053.9 534.2" fill="none" stroke="#4f596b" stroke-width="1.6"/>
<line x1="656" y1="510.4" x2="1046" y2="510.4" stroke="#d47a7c" stroke-width="1" stroke-dasharray="3.5 3"/>
<line x1="656" y1="522.3" x2="1046" y2="522.3" stroke="#eccb4a" stroke-width="1" stroke-dasharray="3 3.2"/>
<circle cx="655.3" cy="510.4" r="3" fill="#e8605c"/>
<circle cx="655.3" cy="522.3" r="3" fill="#edb72b"/>
<path d="M1045 506.5 L1055 510.4 L1045 514.3 L1047.5 510.4Z" fill="#e8605c"/>
<path d="M1045 518.4 L1055 522.3 L1045 526.2 L1047.5 522.3Z" fill="#edb72b"/>
<text x="829" y="506.2" class="tk" style="fill:#c86b72;font-size:7px;letter-spacing:0.45px">严重三相不平衡</text>
<text x="836.6" y="517.5" class="tk" style="fill:#e6bd2e;font-size:7px;letter-spacing:0.45px">三相不平衡</text>
<path d="M655.30 423.50 C655.30 423.50 658.88 447.38 660.61 447.38 C664.20 447.38 664.03 397.14 665.93 397.14 C669.35 397.14 667.72 487.98 671.24 487.98 C673.04 487.98 671.80 450.92 676.56 441.99 C677.12 440.95 681.33 440.95 681.87 440.95 C686.64 440.95 683.68 487.98 687.19 487.98 C688.99 487.98 688.16 469.98 692.50 464.26 C693.48 462.98 696.64 462.98 697.82 462.98 C701.96 462.98 701.54 481.46 703.13 481.46 C706.86 481.46 705.17 436.69 708.45 436.69 C710.49 436.69 711.86 464.26 713.76 464.26 C717.17 464.26 716.42 414.18 719.08 414.18 C721.73 414.18 719.84 440.00 724.39 464.26 C725.16 468.34 727.49 467.27 729.71 470.85 C732.81 475.87 732.82 481.46 735.02 481.46 C738.13 481.46 736.33 469.50 740.33 465.55 C741.64 464.26 744.41 464.26 745.65 464.26 C749.73 464.26 748.31 481.46 750.96 481.46 C753.62 481.46 752.18 464.26 756.28 464.26 C757.49 464.26 760.44 464.26 761.59 464.26 C765.76 464.26 764.25 445.77 766.91 445.77 C769.57 445.77 768.53 455.55 772.22 464.26 C773.85 468.09 775.32 467.27 777.54 470.85 C780.64 475.87 780.74 481.46 782.85 481.46 C786.06 481.46 784.06 464.26 788.17 464.26 C789.38 464.26 792.12 464.26 793.48 464.26 C797.43 464.26 796.67 449.79 798.80 449.79 C801.99 449.79 802.86 472.30 804.11 472.30 C808.18 472.30 806.92 397.14 809.43 397.14 C812.23 397.14 810.36 481.46 814.74 481.46 C815.67 481.46 815.98 464.26 820.05 464.26 C821.29 464.26 823.71 464.26 825.37 465.55 C829.02 468.37 827.11 471.86 830.68 476.32 C832.43 478.50 834.63 476.42 836.00 478.81 C839.94 485.67 837.27 494.81 841.31 494.81 C842.59 494.81 846.02 494.81 846.63 494.81 C851.34 494.81 848.24 453.81 851.94 453.81 C853.55 453.81 855.07 462.25 857.26 470.93 C860.38 483.31 859.56 495.93 862.57 495.93 C864.88 495.93 864.60 477.12 867.89 477.12 C869.92 477.12 871.18 487.98 873.20 487.98 C876.49 487.98 874.95 469.09 878.52 469.09 C880.27 469.09 880.41 477.12 883.83 477.12 C885.72 477.12 887.88 477.12 889.15 477.12 C893.19 477.12 891.47 461.05 894.46 461.05 C896.79 461.05 896.04 469.29 899.77 473.10 C901.35 474.71 904.11 473.10 905.09 474.71 C909.43 481.86 908.01 498.83 910.40 498.83 C913.33 498.83 911.69 469.09 915.72 469.09 C917.00 469.09 919.48 472.63 921.03 477.12 C924.80 488.02 923.43 488.57 926.35 499.87 C928.74 509.15 927.60 518.28 931.66 518.28 C932.91 518.28 934.18 515.71 936.98 515.71 C939.49 515.71 940.09 515.71 942.29 515.71 C945.40 515.71 944.65 518.78 947.61 521.02 C949.96 522.80 951.02 523.75 952.92 523.75 C956.34 523.75 954.94 514.42 958.24 514.42 C960.25 514.42 960.66 516.84 963.55 518.28 C965.97 519.49 966.79 519.73 968.87 519.73 C972.10 519.73 971.52 512.98 974.18 512.98 C976.84 512.98 977.69 519.73 979.49 519.73 C983.01 519.73 981.82 503.81 984.81 503.81 C987.13 503.81 986.38 515.71 990.12 515.71 C991.69 515.71 992.79 515.11 995.44 514.42 C998.11 513.74 999.44 512.98 1000.75 512.98 C1004.75 512.98 1003.80 528.89 1006.07 528.89 C1009.11 528.89 1007.11 507.03 1011.38 507.03 C1012.43 507.03 1014.01 507.91 1016.70 508.48 C1019.32 509.03 1019.34 508.98 1022.01 509.28 C1024.66 509.58 1025.28 509.68 1027.33 509.68 C1030.60 509.68 1030.49 503.01 1032.64 503.01 C1035.81 503.01 1034.75 514.42 1037.96 514.42 C1040.06 514.42 1043.27 508.07 1043.27 508.07" fill="none" stroke="#4f7fdb" stroke-width="1.35" stroke-linejoin="round"/>
<circle cx="655.30" cy="423.50" r="1.00" fill="#4f7fdb"/>
<circle cx="660.61" cy="447.38" r="1.00" fill="#4f7fdb"/>
<circle cx="665.93" cy="397.14" r="1.00" fill="#4f7fdb"/>
<circle cx="671.24" cy="487.98" r="1.00" fill="#4f7fdb"/>
<circle cx="676.56" cy="441.99" r="1.00" fill="#4f7fdb"/>
<circle cx="681.87" cy="440.95" r="1.00" fill="#4f7fdb"/>
<circle cx="687.19" cy="487.98" r="1.00" fill="#4f7fdb"/>
<circle cx="692.50" cy="464.26" r="1.00" fill="#4f7fdb"/>
<circle cx="697.82" cy="462.98" r="1.00" fill="#4f7fdb"/>
<circle cx="703.13" cy="481.46" r="1.00" fill="#4f7fdb"/>
<circle cx="708.45" cy="436.69" r="1.00" fill="#4f7fdb"/>
<circle cx="713.76" cy="464.26" r="1.00" fill="#4f7fdb"/>
<circle cx="719.08" cy="414.18" r="1.00" fill="#4f7fdb"/>
<circle cx="724.39" cy="464.26" r="1.00" fill="#4f7fdb"/>
<circle cx="729.71" cy="470.85" r="1.00" fill="#4f7fdb"/>
<circle cx="735.02" cy="481.46" r="1.00" fill="#4f7fdb"/>
<circle cx="740.33" cy="465.55" r="1.00" fill="#4f7fdb"/>
<circle cx="745.65" cy="464.26" r="1.00" fill="#4f7fdb"/>
<circle cx="750.96" cy="481.46" r="1.00" fill="#4f7fdb"/>
<circle cx="756.28" cy="464.26" r="1.00" fill="#4f7fdb"/>
<circle cx="761.59" cy="464.26" r="1.00" fill="#4f7fdb"/>
<circle cx="766.91" cy="445.77" r="1.00" fill="#4f7fdb"/>
<circle cx="772.22" cy="464.26" r="1.00" fill="#4f7fdb"/>
<circle cx="777.54" cy="470.85" r="1.00" fill="#4f7fdb"/>
<circle cx="782.85" cy="481.46" r="1.00" fill="#4f7fdb"/>
<circle cx="788.17" cy="464.26" r="1.00" fill="#4f7fdb"/>
<circle cx="793.48" cy="464.26" r="1.00" fill="#4f7fdb"/>
<circle cx="798.80" cy="449.79" r="1.00" fill="#4f7fdb"/>
<circle cx="804.11" cy="472.30" r="1.00" fill="#4f7fdb"/>
<circle cx="809.43" cy="397.14" r="1.00" fill="#4f7fdb"/>
<circle cx="814.74" cy="481.46" r="1.00" fill="#4f7fdb"/>
<circle cx="820.05" cy="464.26" r="1.00" fill="#4f7fdb"/>
<circle cx="825.37" cy="465.55" r="1.00" fill="#4f7fdb"/>
<circle cx="830.68" cy="476.32" r="1.00" fill="#4f7fdb"/>
<circle cx="836.00" cy="478.81" r="1.00" fill="#4f7fdb"/>
<circle cx="841.31" cy="494.81" r="1.00" fill="#4f7fdb"/>
<circle cx="846.63" cy="494.81" r="1.00" fill="#4f7fdb"/>
<circle cx="851.94" cy="453.81" r="1.00" fill="#4f7fdb"/>
<circle cx="857.26" cy="470.93" r="1.00" fill="#4f7fdb"/>
<circle cx="862.57" cy="495.93" r="1.00" fill="#4f7fdb"/>
<circle cx="867.89" cy="477.12" r="1.00" fill="#4f7fdb"/>
<circle cx="873.20" cy="487.98" r="1.00" fill="#4f7fdb"/>
<circle cx="878.52" cy="469.09" r="1.00" fill="#4f7fdb"/>
<circle cx="883.83" cy="477.12" r="1.00" fill="#4f7fdb"/>
<circle cx="889.15" cy="477.12" r="1.00" fill="#4f7fdb"/>
<circle cx="894.46" cy="461.05" r="1.00" fill="#4f7fdb"/>
<circle cx="899.77" cy="473.10" r="1.00" fill="#4f7fdb"/>
<circle cx="905.09" cy="474.71" r="1.00" fill="#4f7fdb"/>
<circle cx="910.40" cy="498.83" r="1.00" fill="#4f7fdb"/>
<circle cx="915.72" cy="469.09" r="1.00" fill="#4f7fdb"/>
<circle cx="921.03" cy="477.12" r="1.00" fill="#4f7fdb"/>
<circle cx="926.35" cy="499.87" r="1.00" fill="#4f7fdb"/>
<circle cx="931.66" cy="518.28" r="1.00" fill="#4f7fdb"/>
<circle cx="936.98" cy="515.71" r="1.00" fill="#4f7fdb"/>
<circle cx="942.29" cy="515.71" r="1.00" fill="#4f7fdb"/>
<circle cx="947.61" cy="521.02" r="1.00" fill="#4f7fdb"/>
<circle cx="952.92" cy="523.75" r="1.00" fill="#4f7fdb"/>
<circle cx="958.24" cy="514.42" r="1.00" fill="#4f7fdb"/>
<circle cx="963.55" cy="518.28" r="1.00" fill="#4f7fdb"/>
<circle cx="968.87" cy="519.73" r="1.00" fill="#4f7fdb"/>
<circle cx="974.18" cy="512.98" r="1.00" fill="#4f7fdb"/>
<circle cx="979.49" cy="519.73" r="1.00" fill="#4f7fdb"/>
<circle cx="984.81" cy="503.81" r="1.00" fill="#4f7fdb"/>
<circle cx="990.12" cy="515.71" r="1.00" fill="#4f7fdb"/>
<circle cx="995.44" cy="514.42" r="1.00" fill="#4f7fdb"/>
<circle cx="1000.75" cy="512.98" r="1.00" fill="#4f7fdb"/>
<circle cx="1006.07" cy="528.89" r="1.00" fill="#4f7fdb"/>
<circle cx="1011.38" cy="507.03" r="1.00" fill="#4f7fdb"/>
<circle cx="1016.70" cy="508.48" r="1.00" fill="#4f7fdb"/>
<circle cx="1022.01" cy="509.28" r="1.00" fill="#4f7fdb"/>
<circle cx="1027.33" cy="509.68" r="1.00" fill="#4f7fdb"/>
<circle cx="1032.64" cy="503.01" r="1.00" fill="#4f7fdb"/>
<circle cx="1037.96" cy="514.42" r="1.00" fill="#4f7fdb"/>
<circle cx="1043.27" cy="508.07" r="1.00" fill="#4f7fdb"/>
<circle cx="1053.90" cy="504.46" r="1.40" fill="#4f7fdb"/>
<line x1="310.3" y1="332.6" x2="325.9" y2="332.6" stroke="#35c3d0" stroke-width="1" stroke-opacity="0.65"/>
<circle cx="318.1" cy="332.6" r="3.6" fill="#35c3d0"/>
<line x1="362.9" y1="332.6" x2="378.5" y2="332.6" stroke="#d9a6ee" stroke-width="1" stroke-opacity="0.65"/>
<circle cx="370.7" cy="332.6" r="3.6" fill="#d9a6ee"/>
<line x1="414.7" y1="332.6" x2="430.3" y2="332.6" stroke="#b23a3c" stroke-width="1" stroke-opacity="0.65"/>
<circle cx="422.5" cy="332.6" r="3.6" fill="#b23a3c"/>
<line x1="768.1" y1="332.6" x2="783.7" y2="332.6" stroke="#35c3d0" stroke-width="1" stroke-opacity="0.65"/>
<circle cx="775.9" cy="332.6" r="3.6" fill="#35c3d0"/>
<line x1="820.9" y1="332.6" x2="836.5" y2="332.6" stroke="#d9a6ee" stroke-width="1" stroke-opacity="0.65"/>
<circle cx="828.7" cy="332.6" r="3.6" fill="#d9a6ee"/>
<line x1="873.0" y1="332.6" x2="888.6" y2="332.6" stroke="#b23a3c" stroke-width="1" stroke-opacity="0.65"/>
<circle cx="880.8" cy="332.6" r="3.6" fill="#b23a3c"/>
<line x1="345.9" y1="562.0" x2="361.5" y2="562.0" stroke="#4f7fdb" stroke-width="1" stroke-opacity="0.65"/>
<circle cx="353.7" cy="562.0" r="3.6" fill="#4f7fdb"/>
<line x1="804.4" y1="562.0" x2="820.0" y2="562.0" stroke="#4f7fdb" stroke-width="1" stroke-opacity="0.65"/>
<circle cx="812.2" cy="562.0" r="3.6" fill="#4f7fdb"/>
</svg>

<!-- watermark -->
<svg class="abs" style="left:664px;top:545px" width="46" height="38" viewBox="0 0 46 38">
  <g stroke="#fff" stroke-width="1.6">
  <path d="M17.5 3 C9 3 3 8.5 3 15 C3 18.6 5 21.6 8 23.6 L6.8 28 L11.6 25.2 C13.5 25.8 15.4 26.1 17.5 26.1 C26 26.1 32 20.6 32 15 C32 8.5 26 3 17.5 3Z" fill="#a7a7a7"/>
  <path d="M31 12.5 C23.8 12.5 18.2 17.4 18.2 23.4 C18.2 29.4 23.8 34.2 31 34.2 C32.6 34.2 34 34 35.4 33.5 L39.6 35.8 L38.6 31.9 C41.7 30 43.6 26.9 43.6 23.4 C43.6 17.4 38 12.5 31 12.5Z" fill="#a7a7a7"/>
  </g>
  <circle cx="12.8" cy="11.5" r="1.8" fill="#fff"/><circle cx="22.3" cy="11.5" r="1.8" fill="#fff"/>
  <circle cx="27" cy="20.5" r="1.5" fill="#fff"/><circle cx="35" cy="20.5" r="1.5" fill="#fff"/>
</svg>
<div class="abs" style="left:715px;top:546px;font-size:29px;color:#a3a3a3;white-space:nowrap;text-shadow:0 0 2px #fff,0 0 2px #fff;-webkit-text-stroke:0.35px #a3a3a3">公众号</div>
<div class="abs" style="left:818px;top:562.5px;width:4px;height:4px;border-radius:2px;background:#a3a3a3"></div>
<div class="abs" style="left:838px;top:546px;font-size:29.5px;color:#a3a3a3;white-space:nowrap;text-shadow:0 0 2px #fff,0 0 2px #fff;-webkit-text-stroke:0.35px #a3a3a3">安科瑞能效管理</div>
</body></html>
